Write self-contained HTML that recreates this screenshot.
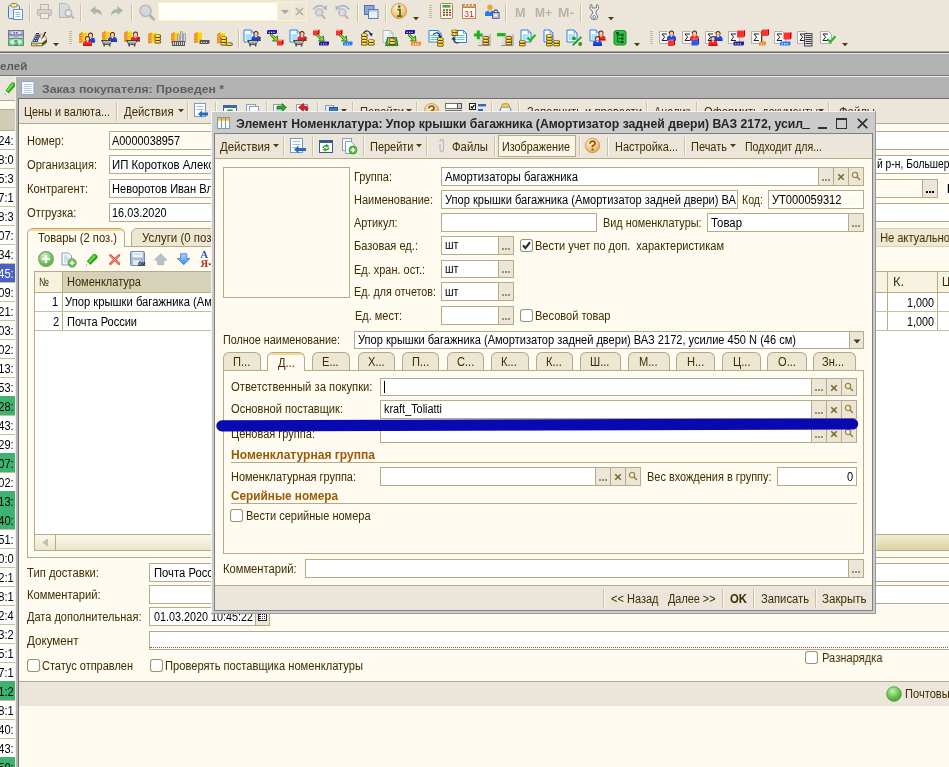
<!DOCTYPE html>
<html lang="ru">
<head>
<meta charset="utf-8">
<title>Элемент Номенклатура</title>
<style>
html,body{margin:0;padding:0;}
body{width:949px;height:767px;overflow:hidden;position:relative;background:#fffbf0;
font-family:"Liberation Sans",sans-serif;font-size:12px;}
#root{position:absolute;left:0;top:0;width:949px;height:767px;overflow:hidden;will-change:transform;}
#root div,#root span.t,#root svg{position:absolute;}
span.t{white-space:pre;display:block;}
</style>
</head>
<body>
<div id="root">
<div style="left:0px;top:0px;width:949px;height:52px;background:#ece6da;"></div>
<div style="left:0px;top:51px;width:949px;height:1px;background:#a8a6a0;"></div>
<div style="left:0px;top:52px;width:949px;height:1px;background:#6a6a6a;"></div>
<div style="left:0px;top:53px;width:949px;height:1px;background:#e2e2e2;"></div>
<div style="left:0px;top:54px;width:949px;height:21px;background:#b2b2b2;"></div>
<div style="left:0px;top:75px;width:949px;height:1px;background:#787878;"></div>
<div style="left:0px;top:76px;width:949px;height:1px;background:#ececec;"></div>
<div style="left:0px;top:77px;width:949px;height:21px;background:#b2b2b2;"></div>
<span class="t" style="top:59px;font-size:11.5px;line-height:14px;color:#5c5c5c;left:-0.5px;font-weight:bold;transform:scaleX(1.0179);transform-origin:0 0;">елей</span>
<svg style="left:0;top:0" width="949" height="52" viewBox="0 0 949 52"><g transform="translate(8 3)"><rect x="0.5" y="2.5" width="11" height="13" rx="1" fill="#dfeaf8" stroke="#4a78c0"/><rect x="3" y="0.5" width="6" height="3.5" rx="1" fill="#f4e8b0" stroke="#a08a40"/><rect x="5.5" y="6.5" width="9" height="10" fill="#fff" stroke="#6a90c8"/><path d="M7.5 9.5 H12.5 M7.5 11.5 H12.5 M7.5 13.5 H12.5" stroke="#9ab8e0"/></g><rect x="29" y="4" width="1" height="18" fill="#c9c2a4"/><rect x="30" y="4" width="1" height="18" fill="#fbf8ee"/><g transform="translate(37 4)"><rect x="3.5" y="0.5" width="8" height="5" fill="#e6e4dc" stroke="#b8b6ae"/><rect x="0.5" y="5.5" width="14" height="6" rx="1" fill="#d4d2ca" stroke="#b8b6ae"/><rect x="3.5" y="9.5" width="8" height="5" fill="#eeece6" stroke="#b8b6ae"/></g><g transform="translate(59 3)"><path d="M0.5 0.5 H7.5 L10.5 3.5 V14.5 H0.5 Z" fill="#d6dae0" stroke="#b8b6ae"/><circle cx="9.5" cy="10" r="3.2" fill="#e8eaee" stroke="#b8b6ae" stroke-width="1.4"/><path d="M12 12.5 L15 15.5" stroke="#b8b6ae" stroke-width="2"/></g><rect x="80" y="4" width="1" height="18" fill="#c9c2a4"/><rect x="81" y="4" width="1" height="18" fill="#fbf8ee"/><g transform="translate(90 6)"><path d="M0 4.5 L5.5 0 V3 Q12 3 12 10 Q10 6.5 5.5 6.5 V9 Z" fill="#a9b8a6"/></g><g transform="translate(111 6)"><path d="M12 4.5 L6.5 0 V3 Q0 3 0 10 Q2 6.5 6.5 6.5 V9 Z" fill="#a9b8a6"/></g><rect x="131" y="4" width="1" height="18" fill="#c9c2a4"/><rect x="132" y="4" width="1" height="18" fill="#fbf8ee"/><g transform="translate(139 4)"><path d="M10.2 10.6 L14.6 15.2" stroke="#b8aea4" stroke-width="2.8" stroke-linecap="round"/><circle cx="6.6" cy="6.8" r="5.6" fill="#cfd6e4" stroke="#c2b6b0" stroke-width="1.5"/></g><g transform="translate(312 3)"><path d="M9.4 11.8 L12.6 15" stroke="#c0b2ac" stroke-width="2.2" stroke-linecap="round"/><circle cx="7.2" cy="9.4" r="3.5" fill="#d3dae8" stroke="#c2b6b2" stroke-width="1.4"/><path d="M1 6.5 Q7 -0.5 13.5 5" fill="none" stroke="#a9b7cc" stroke-width="1.7"/><path d="M15.2 2.2 L14.6 7.4 L10.4 5.2 Z" fill="#a9b7cc"/></g><g transform="translate(335 3)"><path d="M9.4 11.8 L12.6 15" stroke="#c0b2ac" stroke-width="2.2" stroke-linecap="round"/><circle cx="7.2" cy="9.4" r="3.5" fill="#d3dae8" stroke="#c2b6b2" stroke-width="1.4"/><g transform="translate(15.5 0) scale(-1 1)"><path d="M1 6.5 Q7 -0.5 13.5 5" fill="none" stroke="#a9b7cc" stroke-width="1.7"/><path d="M15.2 2.2 L14.6 7.4 L10.4 5.2 Z" fill="#a9b7cc"/></g></g><rect x="357" y="4" width="1" height="18" fill="#c9c2a4"/><rect x="358" y="4" width="1" height="18" fill="#fbf8ee"/><g transform="translate(364 5)"><rect x="0.5" y="0.5" width="9.5" height="9" fill="#8ea8d4" stroke="#4a6ea8"/><rect x="4.5" y="4.5" width="9.5" height="9" fill="#e9eff9" stroke="#5a7cb4"/><rect x="5" y="5" width="8.5" height="1.6" fill="#b4c6e4"/></g><rect x="385" y="4" width="1" height="18" fill="#c9c2a4"/><rect x="386" y="4" width="1" height="18" fill="#fbf8ee"/><defs><radialGradient id="gi" cx="0.4" cy="0.3" r="0.9"><stop offset="0" stop-color="#fff4d8"/><stop offset="0.55" stop-color="#f2c47a"/><stop offset="1" stop-color="#d08a30"/></radialGradient></defs><g transform="translate(391 3)"><circle cx="8" cy="8" r="7.6" fill="url(#gi)" stroke="#c89048" stroke-width="0.8"/><circle cx="8.2" cy="3.6" r="1.35" fill="#4a6a10"/><path d="M6.4 6.6 H9 V13 M6.2 13.2 H10.6" stroke="#4a6a10" stroke-width="1.7" fill="none"/></g><path d="M413 17 h6 l-3 3.2 Z" fill="#4a3c10"/><rect x="429" y="5" width="3" height="1" fill="#c4bb92"/><rect x="429" y="7" width="3" height="1" fill="#c4bb92"/><rect x="429" y="9" width="3" height="1" fill="#c4bb92"/><rect x="429" y="11" width="3" height="1" fill="#c4bb92"/><rect x="429" y="13" width="3" height="1" fill="#c4bb92"/><rect x="429" y="15" width="3" height="1" fill="#c4bb92"/><rect x="429" y="17" width="3" height="1" fill="#c4bb92"/><g transform="translate(440 3)"><rect x="0.5" y="0.5" width="12" height="15" rx="0.8" fill="#fbf6e6" stroke="#a88a58"/><rect x="2.5" y="2" width="8" height="2.6" fill="#44aa44"/><path d="M3 7 H5 M6 7 H8 M3 9.5 H5 M6 9.5 H8 M3 12 H5 M6 12 H8 M9 9.5 H11" stroke="#6a4a20" stroke-width="1.4"/><path d="M9 7 H11 M9 12 H11" stroke="#d03a18" stroke-width="1.4"/></g><g transform="translate(462 3)"><rect x="0.5" y="1.5" width="13" height="14" fill="#fffefa" stroke="#b08a58"/><rect x="0.5" y="1.5" width="13" height="3" fill="#ec9a48" stroke="#b08a58"/><path d="M3.5 1 V3 M7 1 V3 M10.5 1 V3" stroke="#fff2d8" stroke-width="1.2"/><text x="7" y="13.6" font-family="Liberation Sans,sans-serif" font-size="9" fill="#d82818" text-anchor="middle" textLength="10" lengthAdjust="spacingAndGlyphs">31</text></g><g transform="translate(485 4)"><circle cx="5" cy="3.2" r="2.7" fill="#f2a436"/><path d="M0 12 V9.5 Q0 6.6 5 6.6 Q9.6 6.6 9.6 9.5 V12 Z" fill="#2a7ae4"/><path d="M3.6 6.8 L5 8.4 L6.4 6.8Z" fill="#fff"/><rect x="7.5" y="8.5" width="6.6" height="5.8" fill="#b4c4e4" stroke="#4a5a78" stroke-width="0.9"/><path d="M9 8.5 V7 Q10.8 4.8 12.6 7 V8.5" fill="none" stroke="#4a5a78" stroke-width="1.1"/><rect x="9.4" y="10.4" width="2.8" height="2" fill="#fff"/></g><rect x="505" y="4" width="1" height="18" fill="#c9c2a4"/><rect x="506" y="4" width="1" height="18" fill="#fbf8ee"/><rect x="580" y="4" width="1" height="18" fill="#c9c2a4"/><rect x="581" y="4" width="1" height="18" fill="#fbf8ee"/><g transform="translate(589 4)"><path d="M2 0.5 Q0.2 2.2 1 4.6 Q1.8 6.4 3.4 6.8 V10 Q1.6 11 1.6 13 Q1.8 15.6 5.2 15.6 Q8.6 15.6 8.8 13 Q8.8 11 7 10 V6.8 Q8.6 6.4 9.4 4.6 Q10.2 2.2 8.4 0.5 L7.4 1.2 V4 H3 V1.2 Z" fill="#f2f2f4" stroke="#74767c" stroke-width="1"/><ellipse cx="5.2" cy="13" rx="1.4" ry="1.6" fill="#ece7db" stroke="#74767c" stroke-width="0.8"/></g><path d="M608 17 h6 l-3 3.2 Z" fill="#4a3c10"/><g transform="translate(8 30)"><rect x="0.5" y="0.5" width="15" height="4.6" fill="#a9a9d8" stroke="#6c7684"/><ellipse cx="8" cy="2.8" rx="5" ry="1.6" fill="#e4e4f6"/><path d="M5.5 2.8 H10.5" stroke="#3a3a78" stroke-width="1.2" stroke-dasharray="1.6 0.8"/><rect x="0.5" y="5.1" width="15" height="3.4" fill="#c9c9f0" stroke="#6c7684"/><path d="M6 7 H10" stroke="#8a8ab8" stroke-width="0.9"/><rect x="0.5" y="8.5" width="15" height="7" fill="#7cc894" stroke="#5a9a78"/><ellipse cx="8" cy="12" rx="6" ry="2.7" fill="#c4f8cc"/><text x="8" y="14.8" font-family="Liberation Sans,sans-serif" font-size="7.5" font-weight="bold" fill="#2a8a58" text-anchor="middle">$</text></g><g transform="translate(31 30)"><path d="M0.5 13 H11 L15.5 9.6 V12.4 L11 15.8 H0.5 Z" fill="#e6e696" stroke="#3a3a1a" stroke-width="0.7"/><path d="M11 13 L15.5 9.6 V12.4 L11 15.8 Z" fill="#4a4a28"/><path d="M0.5 13 L4.6 4.4 H10.4 L14.8 6.4 L15.5 9.6 L11 13 Z" fill="#f6f6c4" stroke="#6a6a3a" stroke-width="0.6"/><path d="M1.6 12 L4.8 5 H9.2 L6.6 12 Z" fill="#2432a8"/><path d="M4.6 6.6 H8.2 M3.8 8.6 H7.4 M3 10.6 H6.6" stroke="#e8ecff" stroke-width="1" stroke-dasharray="1 0.9"/><rect x="8" y="5.4" width="1.6" height="2" fill="#ee2020"/><path d="M3.4 3.6 Q2.6 0.4 5.6 0.6 L8.4 1.6 L7.6 4.2 Z" fill="#ffffff" stroke="#b8b8c8" stroke-width="0.5"/><path d="M5 3.6 H8" stroke="#202020" stroke-width="1"/><path d="M10.6 9.4 L13.4 4.4 Q13.2 2.6 15 2.4" fill="none" stroke="#181818" stroke-width="1.1"/><path d="M10 10.4 L12 7.4 L14.6 8.4 L13 11 Z" fill="#ffffff" stroke="#b0b0b0" stroke-width="0.4"/><path d="M3.4 14.4 H6.4" stroke="#e89a28" stroke-width="0.9"/></g><path d="M53 43 h6 l-3 3.2 Z" fill="#4a3c10"/><rect x="69" y="31" width="3" height="1" fill="#c4bb92"/><rect x="69" y="33" width="3" height="1" fill="#c4bb92"/><rect x="69" y="35" width="3" height="1" fill="#c4bb92"/><rect x="69" y="37" width="3" height="1" fill="#c4bb92"/><rect x="69" y="39" width="3" height="1" fill="#c4bb92"/><rect x="69" y="41" width="3" height="1" fill="#c4bb92"/><rect x="69" y="43" width="3" height="1" fill="#c4bb92"/><g transform="translate(79 31)"><path d="M0 3 L3.8 0.6 V11.4 L0 12 Z" fill="#f4841a"/><path d="M3.8 0.6 L8 0 V10.6 L3.8 11.4 Z" fill="#fbe01a"/><path d="M3.8 0.6 L8 0 L8 1.2 L3.8 2 Z" fill="#fff07a"/><path d="M0 5.2 L3.8 3.4 M0 7.6 L3.8 6 M0 10 L3.8 8.6" stroke="#ffb864" stroke-width="0.8"/><path d="M3.8 3.6 L8 3 M3.8 6.2 L8 5.6 M3.8 8.8 L8 8.2" stroke="#e8b800" stroke-width="0.7"/></g><g transform="translate(86 32)"><path d="M0 10.5 V8 Q0 5.6 2.6 5.2 L4.5 6.8 L6.4 5.2 Q9 5.6 9 8 V10.5 Z" fill="#2048e8"/><path d="M0 10.5 V9 H9 V10.5 Z" fill="#0a2aa0" opacity="0.55"/><path d="M3.2 5.2 L4.5 7 L5.8 5.2 Z" fill="#ffffff"/><circle cx="4.5" cy="3" r="2.5" fill="#5a1c0c"/><ellipse cx="4.5" cy="3.5" rx="1.7" ry="1.9" fill="#f9cfa6"/></g><g transform="translate(83 35.5)"><path d="M0 10.5 V8 Q0 5.6 2.6 5.2 L4.5 6.8 L6.4 5.2 Q9 5.6 9 8 V10.5 Z" fill="#fa2424"/><path d="M0 10.5 V9 H9 V10.5 Z" fill="#a00808" opacity="0.55"/><path d="M3.2 5.2 L4.5 7 L5.8 5.2 Z" fill="#ffffff"/><circle cx="4.5" cy="3" r="2.5" fill="#5a1c0c"/><ellipse cx="4.5" cy="3.5" rx="1.7" ry="1.9" fill="#f9cfa6"/></g><g transform="translate(102 30)"><path d="M0 3 L3.8 0.6 V11.4 L0 12 Z" fill="#f4841a"/><path d="M3.8 0.6 L8 0 V10.6 L3.8 11.4 Z" fill="#fbe01a"/><path d="M3.8 0.6 L8 0 L8 1.2 L3.8 2 Z" fill="#fff07a"/><path d="M0 5.2 L3.8 3.4 M0 7.6 L3.8 6 M0 10 L3.8 8.6" stroke="#ffb864" stroke-width="0.8"/><path d="M3.8 3.6 L8 3 M3.8 6.2 L8 5.6 M3.8 8.8 L8 8.2" stroke="#e8b800" stroke-width="0.7"/></g><g transform="translate(108 31.5)"><path d="M0 10.5 V8 Q0 5.6 2.6 5.2 L4.5 6.8 L6.4 5.2 Q9 5.6 9 8 V10.5 Z" fill="#2048e8"/><path d="M0 10.5 V9 H9 V10.5 Z" fill="#0a2aa0" opacity="0.55"/><path d="M3.2 5.2 L4.5 7 L5.8 5.2 Z" fill="#ffffff"/><circle cx="4.5" cy="3" r="2.5" fill="#5a1c0c"/><ellipse cx="4.5" cy="3.5" rx="1.7" ry="1.9" fill="#f9cfa6"/></g><g transform="translate(101 40)"><path d="M0 0 H11.5 L9.2 5 H2.6 Z" fill="#454545"/><path d="M11 0.6 L13.6 -2.8" stroke="#454545" stroke-width="1.3"/><path d="M3.4 5 L3 6.4 M8.4 5 L8.8 6.4" stroke="#454545" stroke-width="1.6"/><circle cx="3" cy="1.9" r="0.85" fill="#fff"/><circle cx="5" cy="1.9" r="0.85" fill="#fff"/><circle cx="7" cy="1.9" r="0.85" fill="#fff"/><circle cx="9" cy="1.9" r="0.85" fill="#fff"/><circle cx="4.2" cy="3.7" r="0.6" fill="#ddd"/><circle cx="6" cy="3.7" r="0.6" fill="#ddd"/><circle cx="7.8" cy="3.7" r="0.6" fill="#ddd"/></g><g transform="translate(124 30)"><path d="M0 3 L3.8 0.6 V11.4 L0 12 Z" fill="#f4841a"/><path d="M3.8 0.6 L8 0 V10.6 L3.8 11.4 Z" fill="#fbe01a"/><path d="M3.8 0.6 L8 0 L8 1.2 L3.8 2 Z" fill="#fff07a"/><path d="M0 5.2 L3.8 3.4 M0 7.6 L3.8 6 M0 10 L3.8 8.6" stroke="#ffb864" stroke-width="0.8"/><path d="M3.8 3.6 L8 3 M3.8 6.2 L8 5.6 M3.8 8.8 L8 8.2" stroke="#e8b800" stroke-width="0.7"/></g><g transform="translate(131 31)"><path d="M0 10.5 V8 Q0 5.6 2.6 5.2 L4.5 6.8 L6.4 5.2 Q9 5.6 9 8 V10.5 Z" fill="#fa2424"/><path d="M0 10.5 V9 H9 V10.5 Z" fill="#a00808" opacity="0.55"/><path d="M3.2 5.2 L4.5 7 L5.8 5.2 Z" fill="#ffffff"/><circle cx="4.5" cy="3" r="2.5" fill="#5a1c0c"/><ellipse cx="4.5" cy="3.5" rx="1.7" ry="1.9" fill="#f9cfa6"/></g><g transform="translate(126 40)"><path d="M0 0 H11.5 L9.2 5 H2.6 Z" fill="#454545"/><path d="M11 0.6 L13.6 -2.8" stroke="#454545" stroke-width="1.3"/><path d="M3.4 5 L3 6.4 M8.4 5 L8.8 6.4" stroke="#454545" stroke-width="1.6"/><circle cx="3" cy="1.9" r="0.85" fill="#fff"/><circle cx="5" cy="1.9" r="0.85" fill="#fff"/><circle cx="7" cy="1.9" r="0.85" fill="#fff"/><circle cx="9" cy="1.9" r="0.85" fill="#fff"/><circle cx="4.2" cy="3.7" r="0.6" fill="#ddd"/><circle cx="6" cy="3.7" r="0.6" fill="#ddd"/><circle cx="7.8" cy="3.7" r="0.6" fill="#ddd"/></g><g transform="translate(148 31.5)"><path d="M0 3 L3.8 0.6 V11.4 L0 12 Z" fill="#f4841a"/><path d="M3.8 0.6 L8 0 V10.6 L3.8 11.4 Z" fill="#fbe01a"/><path d="M3.8 0.6 L8 0 L8 1.2 L3.8 2 Z" fill="#fff07a"/><path d="M0 5.2 L3.8 3.4 M0 7.6 L3.8 6 M0 10 L3.8 8.6" stroke="#ffb864" stroke-width="0.8"/><path d="M3.8 3.6 L8 3 M3.8 6.2 L8 5.6 M3.8 8.8 L8 8.2" stroke="#e8b800" stroke-width="0.7"/></g><g transform="translate(154.5 34.5)"><rect x="0" y="5.8" width="6.6" height="3.2" rx="1.5" fill="#4a2a00"/><rect x="0.6" y="6.4" width="5.4" height="1.9" rx="0.9" fill="#ffd41a"/><rect x="1.4" y="6.5" width="2.2" height="0.8" fill="#fff6b0"/><rect x="0" y="2.9" width="6.6" height="3.2" rx="1.5" fill="#4a2a00"/><rect x="0.6" y="3.5" width="5.4" height="1.9" rx="0.9" fill="#ffd41a"/><rect x="1.4" y="3.6" width="2.2" height="0.8" fill="#fff6b0"/><rect x="0" y="0.0" width="6.6" height="3.2" rx="1.5" fill="#4a2a00"/><rect x="0.6" y="0.6" width="5.4" height="1.9" rx="0.9" fill="#ffd41a"/><rect x="1.4" y="0.7" width="2.2" height="0.8" fill="#fff6b0"/></g><g transform="translate(171 31)"><path d="M0 3 L3.8 0.6 V11.4 L0 12 Z" fill="#f4841a"/><path d="M3.8 0.6 L8 0 V10.6 L3.8 11.4 Z" fill="#fbe01a"/><path d="M3.8 0.6 L8 0 L8 1.2 L3.8 2 Z" fill="#fff07a"/><path d="M0 5.2 L3.8 3.4 M0 7.6 L3.8 6 M0 10 L3.8 8.6" stroke="#ffb864" stroke-width="0.8"/><path d="M3.8 3.6 L8 3 M3.8 6.2 L8 5.6 M3.8 8.8 L8 8.2" stroke="#e8b800" stroke-width="0.7"/></g><g transform="translate(176 31)"><path d="M1.5 11 V4 L2.5 3 L3.5 4 V11 M4.5 11 V1 L5.5 0 L6.5 1 V11 M7.5 11 V3 L8.5 2 L9.5 3 V11" fill="#d4d8dc" stroke="#7a7e84" stroke-width="0.6"/></g><g transform="translate(172 41)"><rect x="0" y="0" width="13" height="5" fill="#585c60"/><path d="M1.5 1 V4 M3.5 1 V4 M5.5 1 V4 M7.5 1 V4 M9.5 1 V4 M11.5 1 V4" stroke="#e4e4e4" stroke-width="0.9"/></g><g transform="translate(194 31)"><path d="M0 3 L3.8 0.6 V11.4 L0 12 Z" fill="#f4841a"/><path d="M3.8 0.6 L8 0 V10.6 L3.8 11.4 Z" fill="#fbe01a"/><path d="M3.8 0.6 L8 0 L8 1.2 L3.8 2 Z" fill="#fff07a"/><path d="M0 5.2 L3.8 3.4 M0 7.6 L3.8 6 M0 10 L3.8 8.6" stroke="#ffb864" stroke-width="0.8"/><path d="M3.8 3.6 L8 3 M3.8 6.2 L8 5.6 M3.8 8.8 L8 8.2" stroke="#e8b800" stroke-width="0.7"/></g><g transform="translate(199.5 40)"><path d="M0 1 L1 0 H10 V3 L9 4 H0 Z" fill="#50545a"/><path d="M1.6 2.4 H7.6" stroke="#e8e8e8" stroke-width="1.2" stroke-dasharray="1.2 1.2"/></g><g transform="translate(217 31.5)"><path d="M0 3 L3.8 0.6 V11.4 L0 12 Z" fill="#f4841a"/><path d="M3.8 0.6 L8 0 V10.6 L3.8 11.4 Z" fill="#fbe01a"/><path d="M3.8 0.6 L8 0 L8 1.2 L3.8 2 Z" fill="#fff07a"/><path d="M0 5.2 L3.8 3.4 M0 7.6 L3.8 6 M0 10 L3.8 8.6" stroke="#ffb864" stroke-width="0.8"/><path d="M3.8 3.6 L8 3 M3.8 6.2 L8 5.6 M3.8 8.8 L8 8.2" stroke="#e8b800" stroke-width="0.7"/></g><g transform="translate(220.5 36.5)"><rect x="0" y="5.8" width="6.6" height="3.2" rx="1.5" fill="#4a2a00"/><rect x="0.6" y="6.4" width="5.4" height="1.9" rx="0.9" fill="#ffd41a"/><rect x="1.4" y="6.5" width="2.2" height="0.8" fill="#fff6b0"/><rect x="0" y="2.9" width="6.6" height="3.2" rx="1.5" fill="#4a2a00"/><rect x="0.6" y="3.5" width="5.4" height="1.9" rx="0.9" fill="#ffd41a"/><rect x="1.4" y="3.6" width="2.2" height="0.8" fill="#fff6b0"/><rect x="0" y="0.0" width="6.6" height="3.2" rx="1.5" fill="#4a2a00"/><rect x="0.6" y="0.6" width="5.4" height="1.9" rx="0.9" fill="#ffd41a"/><rect x="1.4" y="0.7" width="2.2" height="0.8" fill="#fff6b0"/></g><g transform="translate(226 42.6)"><rect x="0" y="0.0" width="6.6" height="3.2" rx="1.5" fill="#4a2a00"/><rect x="0.6" y="0.6" width="5.4" height="1.9" rx="0.9" fill="#ffd41a"/><rect x="1.4" y="0.7" width="2.2" height="0.8" fill="#fff6b0"/></g><rect x="238" y="30" width="1" height="18" fill="#c9c2a4"/><rect x="239" y="30" width="1" height="18" fill="#fbf8ee"/><g transform="translate(243.5 29.5)"><path d="M0.5 0.5 H7.5 L10.5 3.5 V12.5 H0.5 Z" fill="#ffffff" stroke="#2a80e0"/><path d="M7.5 0.5 V3.5 H10.5" fill="none" stroke="#2a80e0" stroke-width="0.7"/><path d="M2 5.5 H8.5" stroke="#40c0f0" stroke-width="0.9"/><path d="M2 7.5 H8.5" stroke="#40c0f0" stroke-width="0.9"/><path d="M2 9.5 H8.5" stroke="#40c0f0" stroke-width="0.9"/></g><g transform="translate(251.5 30.5)"><path d="M0 10.5 V8 Q0 5.6 2.6 5.2 L4.5 6.8 L6.4 5.2 Q9 5.6 9 8 V10.5 Z" fill="#2048e8"/><path d="M0 10.5 V9 H9 V10.5 Z" fill="#0a2aa0" opacity="0.55"/><path d="M3.2 5.2 L4.5 7 L5.8 5.2 Z" fill="#ffffff"/><circle cx="4.5" cy="3" r="2.5" fill="#5a1c0c"/><ellipse cx="4.5" cy="3.5" rx="1.7" ry="1.9" fill="#f9cfa6"/></g><g transform="translate(247 40)"><path d="M0 0 H11.5 L9.2 5 H2.6 Z" fill="#454545"/><path d="M11 0.6 L13.6 -2.8" stroke="#454545" stroke-width="1.3"/><path d="M3.4 5 L3 6.4 M8.4 5 L8.8 6.4" stroke="#454545" stroke-width="1.6"/><circle cx="3" cy="1.9" r="0.85" fill="#fff"/><circle cx="5" cy="1.9" r="0.85" fill="#fff"/><circle cx="7" cy="1.9" r="0.85" fill="#fff"/><circle cx="9" cy="1.9" r="0.85" fill="#fff"/><circle cx="4.2" cy="3.7" r="0.6" fill="#ddd"/><circle cx="6" cy="3.7" r="0.6" fill="#ddd"/><circle cx="7.8" cy="3.7" r="0.6" fill="#ddd"/></g><g transform="translate(267 30)"><path d="M0 1 L1 0 H10 V3 L9 4 H0 Z" fill="#1c1cb4"/><path d="M1.6 2.4 H7.6" stroke="#ffe040" stroke-width="1.2" stroke-dasharray="1.2 1.2"/></g><g transform="translate(269.5 33.5)"><path d="M0.5 1.8 L2 0.4 L6.2 4.2 L7.8 2.4 L8.6 7.6 L3 7.4 L4.8 5.8 Z" fill="#8cdc28" stroke="#1e5c10" stroke-width="0.8" stroke-linejoin="round"/></g><g transform="translate(277 39.5)"><rect x="0" y="1" width="5" height="5" fill="#ff3030"/><path d="M0 1 L1.5 0 H6.5 L5 1Z" fill="#ff9090"/><path d="M5 1 L6.5 0 V4.5 L5 6Z" fill="#c00000"/></g><g transform="translate(289.5 29.5)"><path d="M0.5 0.5 H7.5 L10.5 3.5 V12.5 H0.5 Z" fill="#ffffff" stroke="#2a80e0"/><path d="M7.5 0.5 V3.5 H10.5" fill="none" stroke="#2a80e0" stroke-width="0.7"/><path d="M2 5.5 H8.5" stroke="#40c0f0" stroke-width="0.9"/><path d="M2 7.5 H8.5" stroke="#40c0f0" stroke-width="0.9"/><path d="M2 9.5 H8.5" stroke="#40c0f0" stroke-width="0.9"/></g><g transform="translate(297.5 30.5)"><path d="M0 10.5 V8 Q0 5.6 2.6 5.2 L4.5 6.8 L6.4 5.2 Q9 5.6 9 8 V10.5 Z" fill="#fa2424"/><path d="M0 10.5 V9 H9 V10.5 Z" fill="#a00808" opacity="0.55"/><path d="M3.2 5.2 L4.5 7 L5.8 5.2 Z" fill="#ffffff"/><circle cx="4.5" cy="3" r="2.5" fill="#5a1c0c"/><ellipse cx="4.5" cy="3.5" rx="1.7" ry="1.9" fill="#f9cfa6"/></g><g transform="translate(293 40)"><path d="M0 0 H11.5 L9.2 5 H2.6 Z" fill="#454545"/><path d="M11 0.6 L13.6 -2.8" stroke="#454545" stroke-width="1.3"/><path d="M3.4 5 L3 6.4 M8.4 5 L8.8 6.4" stroke="#454545" stroke-width="1.6"/><circle cx="3" cy="1.9" r="0.85" fill="#fff"/><circle cx="5" cy="1.9" r="0.85" fill="#fff"/><circle cx="7" cy="1.9" r="0.85" fill="#fff"/><circle cx="9" cy="1.9" r="0.85" fill="#fff"/><circle cx="4.2" cy="3.7" r="0.6" fill="#ddd"/><circle cx="6" cy="3.7" r="0.6" fill="#ddd"/><circle cx="7.8" cy="3.7" r="0.6" fill="#ddd"/></g><g transform="translate(313 29.5)"><rect x="0" y="1" width="5" height="5" fill="#ff3030"/><path d="M0 1 L1.5 0 H6.5 L5 1Z" fill="#ff9090"/><path d="M5 1 L6.5 0 V4.5 L5 6Z" fill="#c00000"/></g><g transform="translate(315.5 33.5)"><path d="M0.5 1.8 L2 0.4 L6.2 4.2 L7.8 2.4 L8.6 7.6 L3 7.4 L4.8 5.8 Z" fill="#8cdc28" stroke="#1e5c10" stroke-width="0.8" stroke-linejoin="round"/></g><g transform="translate(319 41.6)"><path d="M0 1 L1 0 H10 V3 L9 4 H0 Z" fill="#1c1cb4"/><path d="M1.6 2.4 H7.6" stroke="#ffe040" stroke-width="1.2" stroke-dasharray="1.2 1.2"/></g><g transform="translate(336 29.5)"><rect x="0" y="1" width="5" height="5" fill="#ff3030"/><path d="M0 1 L1.5 0 H6.5 L5 1Z" fill="#ff9090"/><path d="M5 1 L6.5 0 V4.5 L5 6Z" fill="#c00000"/></g><g transform="translate(338.5 33.5)"><path d="M0.5 1.8 L2 0.4 L6.2 4.2 L7.8 2.4 L8.6 7.6 L3 7.4 L4.8 5.8 Z" fill="#8cdc28" stroke="#1e5c10" stroke-width="0.8" stroke-linejoin="round"/></g><g transform="translate(343 41.6)"><path d="M0 1 L1 0 H9.5 V3 L8.5 4 H0 Z" fill="#2a7af0"/><path d="M1.6 2.4 H7.1" stroke="#ffffff" stroke-width="1.2" stroke-dasharray="1.2 1.2"/></g><g transform="translate(361 33.5)"><rect x="0" y="8.7" width="6.6" height="3.2" rx="1.5" fill="#4a2a00"/><rect x="0.6" y="9.3" width="5.4" height="1.9" rx="0.9" fill="#ffd41a"/><rect x="1.4" y="9.4" width="2.2" height="0.8" fill="#fff6b0"/><rect x="0" y="5.8" width="6.6" height="3.2" rx="1.5" fill="#4a2a00"/><rect x="0.6" y="6.4" width="5.4" height="1.9" rx="0.9" fill="#ffd41a"/><rect x="1.4" y="6.5" width="2.2" height="0.8" fill="#fff6b0"/><rect x="0" y="2.9" width="6.6" height="3.2" rx="1.5" fill="#4a2a00"/><rect x="0.6" y="3.5" width="5.4" height="1.9" rx="0.9" fill="#ffd41a"/><rect x="1.4" y="3.6" width="2.2" height="0.8" fill="#fff6b0"/><rect x="0" y="0.0" width="6.6" height="3.2" rx="1.5" fill="#4a2a00"/><rect x="0.6" y="0.6" width="5.4" height="1.9" rx="0.9" fill="#ffd41a"/><rect x="1.4" y="0.7" width="2.2" height="0.8" fill="#fff6b0"/></g><g transform="translate(368 39.4)"><rect x="0" y="2.9" width="6.6" height="3.2" rx="1.5" fill="#4a2a00"/><rect x="0.6" y="3.5" width="5.4" height="1.9" rx="0.9" fill="#ffd41a"/><rect x="1.4" y="3.6" width="2.2" height="0.8" fill="#fff6b0"/><rect x="0" y="0.0" width="6.6" height="3.2" rx="1.5" fill="#4a2a00"/><rect x="0.6" y="0.6" width="5.4" height="1.9" rx="0.9" fill="#ffd41a"/><rect x="1.4" y="0.7" width="2.2" height="0.8" fill="#fff6b0"/></g><g transform="translate(363 30)"><path d="M0.5 3 Q4.5 -1.5 8 4" fill="none" stroke="#1a2a5a" stroke-width="1.2"/><path d="M5.8 3.6 L9.8 3.2 L8.4 6.6Z" fill="#1a2a5a"/></g><g transform="translate(382.5 30)"><path d="M0.5 0.5 H7.5 L10.5 3.5 V12.5 H0.5 Z" fill="#f4f4f4" stroke="#b4b4b4"/><path d="M7.5 0.5 V3.5 H10.5" fill="none" stroke="#b4b4b4" stroke-width="0.7"/><path d="M2 5.5 H8.5" stroke="#e0e0e0" stroke-width="0.9"/><path d="M2 7.5 H8.5" stroke="#e0e0e0" stroke-width="0.9"/><path d="M2 9.5 H8.5" stroke="#e0e0e0" stroke-width="0.9"/></g><g transform="translate(385.5 37)"><path d="M2 0.5 H11 L12.5 8.6 H0 Z" fill="#3aa83a" stroke="#1a6a1a" stroke-width="0.8"/><rect x="3" y="1.5" width="7" height="5.5" fill="#e8f4d8"/></g><g transform="translate(389 38.6)"><rect x="0" y="2.9" width="6.6" height="3.2" rx="1.5" fill="#4a2a00"/><rect x="0.6" y="3.5" width="5.4" height="1.9" rx="0.9" fill="#ffd41a"/><rect x="1.4" y="3.6" width="2.2" height="0.8" fill="#fff6b0"/><rect x="0" y="0.0" width="6.6" height="3.2" rx="1.5" fill="#4a2a00"/><rect x="0.6" y="0.6" width="5.4" height="1.9" rx="0.9" fill="#ffd41a"/><rect x="1.4" y="0.7" width="2.2" height="0.8" fill="#fff6b0"/></g><g transform="translate(405 30)"><path d="M0 1 L1 0 H10 V3 L9 4 H0 Z" fill="#1c1cb4"/><path d="M1.6 2.4 H7.6" stroke="#ffe040" stroke-width="1.2" stroke-dasharray="1.2 1.2"/></g><g transform="translate(407.5 33.5)"><path d="M0.5 1.8 L2 0.4 L6.2 4.2 L7.8 2.4 L8.6 7.6 L3 7.4 L4.8 5.8 Z" fill="#8cdc28" stroke="#1e5c10" stroke-width="0.8" stroke-linejoin="round"/></g><g transform="translate(411 41.8)"><path d="M0 1 L1 0 H10 V3 L9 4 H0 Z" fill="#f08838"/><path d="M1.6 2.4 H7.6" stroke="#ffffff" stroke-width="1.2" stroke-dasharray="1.2 1.2"/></g><g transform="translate(428.5 30)"><path d="M0.5 0.5 H9.5 L12.5 3.5 V12.0 H0.5 Z" fill="#ffffff" stroke="#2a80e0"/><path d="M9.5 0.5 V3.5 H12.5" fill="none" stroke="#2a80e0" stroke-width="0.7"/><path d="M2 5.5 H10.5" stroke="#40c0f0" stroke-width="0.9"/><path d="M2 7.5 H10.5" stroke="#40c0f0" stroke-width="0.9"/><path d="M2 9.5 H10.5" stroke="#40c0f0" stroke-width="0.9"/></g><g transform="translate(437 37.4)"><rect x="0" y="5.8" width="6.6" height="3.2" rx="1.5" fill="#4a2a00"/><rect x="0.6" y="6.4" width="5.4" height="1.9" rx="0.9" fill="#ffd41a"/><rect x="1.4" y="6.5" width="2.2" height="0.8" fill="#fff6b0"/><rect x="0" y="2.9" width="6.6" height="3.2" rx="1.5" fill="#4a2a00"/><rect x="0.6" y="3.5" width="5.4" height="1.9" rx="0.9" fill="#ffd41a"/><rect x="1.4" y="3.6" width="2.2" height="0.8" fill="#fff6b0"/><rect x="0" y="0.0" width="6.6" height="3.2" rx="1.5" fill="#4a2a00"/><rect x="0.6" y="0.6" width="5.4" height="1.9" rx="0.9" fill="#ffd41a"/><rect x="1.4" y="0.7" width="2.2" height="0.8" fill="#fff6b0"/></g><g transform="translate(433 32)"><path d="M0 2.5 Q5 -1.5 7 4" fill="none" stroke="#1a2a5a" stroke-width="1.1"/><path d="M5 3.6 H9 L7 6.6Z" fill="#1a2a5a"/></g><g transform="translate(454.5 30)"><path d="M0.5 0.5 H9.0 L12.0 3.5 V12.5 H0.5 Z" fill="#ffffff" stroke="#2a80e0"/><path d="M9.0 0.5 V3.5 H12.0" fill="none" stroke="#2a80e0" stroke-width="0.7"/><path d="M2 5.5 H10.0" stroke="#40c0f0" stroke-width="0.9"/><path d="M2 7.5 H10.0" stroke="#40c0f0" stroke-width="0.9"/><path d="M2 9.5 H10.0" stroke="#40c0f0" stroke-width="0.9"/></g><g transform="translate(451.5 29.8)"><rect x="0" y="2.9" width="6.6" height="3.2" rx="1.5" fill="#4a2a00"/><rect x="0.6" y="3.5" width="5.4" height="1.9" rx="0.9" fill="#ffd41a"/><rect x="1.4" y="3.6" width="2.2" height="0.8" fill="#fff6b0"/><rect x="0" y="0.0" width="6.6" height="3.2" rx="1.5" fill="#4a2a00"/><rect x="0.6" y="0.6" width="5.4" height="1.9" rx="0.9" fill="#ffd41a"/><rect x="1.4" y="0.7" width="2.2" height="0.8" fill="#fff6b0"/></g><g transform="translate(452 37)"><path d="M6.5 6 Q1.5 6.5 1.6 1.6" fill="none" stroke="#1a2a5a" stroke-width="1.1"/><path d="M-0.6 2.6 L1.6 -0.4 L3.8 2.8Z" fill="#1a2a5a"/></g><g transform="translate(478 34)"><path d="M3 0.5 H12 V11.5 H0 Z" fill="#dcdcdc"/><path d="M0 11.5 H12 V0.5" fill="none" stroke="#8a8a8a" stroke-width="0.9"/></g><g transform="translate(482.5 36.3)"><rect x="0" y="5.8" width="6.6" height="3.2" rx="1.5" fill="#4a2a00"/><rect x="0.6" y="6.4" width="5.4" height="1.9" rx="0.9" fill="#ffd41a"/><rect x="1.4" y="6.5" width="2.2" height="0.8" fill="#fff6b0"/><rect x="0" y="2.9" width="6.6" height="3.2" rx="1.5" fill="#4a2a00"/><rect x="0.6" y="3.5" width="5.4" height="1.9" rx="0.9" fill="#ffd41a"/><rect x="1.4" y="3.6" width="2.2" height="0.8" fill="#fff6b0"/><rect x="0" y="0.0" width="6.6" height="3.2" rx="1.5" fill="#4a2a00"/><rect x="0.6" y="0.6" width="5.4" height="1.9" rx="0.9" fill="#ffd41a"/><rect x="1.4" y="0.7" width="2.2" height="0.8" fill="#fff6b0"/></g><g transform="translate(474 30.6)"><path d="M4.3 0 V8.6 M0 4.3 H8.6" stroke="#18b418" stroke-width="3"/></g><g transform="translate(501 34)"><path d="M3 0.5 H12 V11.5 H0 Z" fill="#dcdcdc"/><path d="M0 11.5 H12 V0.5" fill="none" stroke="#8a8a8a" stroke-width="0.9"/></g><g transform="translate(505.5 36.3)"><rect x="0" y="5.8" width="6.6" height="3.2" rx="1.5" fill="#4a2a00"/><rect x="0.6" y="6.4" width="5.4" height="1.9" rx="0.9" fill="#ffd41a"/><rect x="1.4" y="6.5" width="2.2" height="0.8" fill="#fff6b0"/><rect x="0" y="2.9" width="6.6" height="3.2" rx="1.5" fill="#4a2a00"/><rect x="0.6" y="3.5" width="5.4" height="1.9" rx="0.9" fill="#ffd41a"/><rect x="1.4" y="3.6" width="2.2" height="0.8" fill="#fff6b0"/><rect x="0" y="0.0" width="6.6" height="3.2" rx="1.5" fill="#4a2a00"/><rect x="0.6" y="0.6" width="5.4" height="1.9" rx="0.9" fill="#ffd41a"/><rect x="1.4" y="0.7" width="2.2" height="0.8" fill="#fff6b0"/></g><g transform="translate(497 33)"><path d="M0 1.7 H8.6" stroke="#18b418" stroke-width="3.2"/></g><g transform="translate(520.5 29.5)"><path d="M0.5 0.5 H7.5 L10.5 3.5 V12.5 H0.5 Z" fill="#ffffff" stroke="#2a80e0"/><path d="M7.5 0.5 V3.5 H10.5" fill="none" stroke="#2a80e0" stroke-width="0.7"/><path d="M2 5.5 H8.5" stroke="#40c0f0" stroke-width="0.9"/><path d="M2 7.5 H8.5" stroke="#40c0f0" stroke-width="0.9"/><path d="M2 9.5 H8.5" stroke="#40c0f0" stroke-width="0.9"/></g><g transform="translate(527 34)"><path d="M0.5 3.5 L3.2 6.5 L8.5 0.8" fill="none" stroke="#28b428" stroke-width="2.2"/></g><g transform="translate(519 40.2)"><rect x="0" y="2.9" width="6.6" height="3.2" rx="1.5" fill="#4a2a00"/><rect x="0.6" y="3.5" width="5.4" height="1.9" rx="0.9" fill="#ffd41a"/><rect x="1.4" y="3.6" width="2.2" height="0.8" fill="#fff6b0"/><rect x="0" y="0.0" width="6.6" height="3.2" rx="1.5" fill="#4a2a00"/><rect x="0.6" y="0.6" width="5.4" height="1.9" rx="0.9" fill="#ffd41a"/><rect x="1.4" y="0.7" width="2.2" height="0.8" fill="#fff6b0"/></g><g transform="translate(543.5 29.5)"><path d="M0.5 0.5 H6.5 L9.5 3.5 V12.5 H0.5 Z" fill="#ffffff" stroke="#2a80e0"/><path d="M6.5 0.5 V3.5 H9.5" fill="none" stroke="#2a80e0" stroke-width="0.7"/><path d="M2 5.5 H7.5" stroke="#40c0f0" stroke-width="0.9"/><path d="M2 7.5 H7.5" stroke="#40c0f0" stroke-width="0.9"/><path d="M2 9.5 H7.5" stroke="#40c0f0" stroke-width="0.9"/></g><g transform="translate(546 34.4)"><rect x="0" y="8.7" width="6.6" height="3.2" rx="1.5" fill="#4a2a00"/><rect x="0.6" y="9.3" width="5.4" height="1.9" rx="0.9" fill="#ffd41a"/><rect x="1.4" y="9.4" width="2.2" height="0.8" fill="#fff6b0"/><rect x="0" y="5.8" width="6.6" height="3.2" rx="1.5" fill="#4a2a00"/><rect x="0.6" y="6.4" width="5.4" height="1.9" rx="0.9" fill="#ffd41a"/><rect x="1.4" y="6.5" width="2.2" height="0.8" fill="#fff6b0"/><rect x="0" y="2.9" width="6.6" height="3.2" rx="1.5" fill="#4a2a00"/><rect x="0.6" y="3.5" width="5.4" height="1.9" rx="0.9" fill="#ffd41a"/><rect x="1.4" y="3.6" width="2.2" height="0.8" fill="#fff6b0"/><rect x="0" y="0.0" width="6.6" height="3.2" rx="1.5" fill="#4a2a00"/><rect x="0.6" y="0.6" width="5.4" height="1.9" rx="0.9" fill="#ffd41a"/><rect x="1.4" y="0.7" width="2.2" height="0.8" fill="#fff6b0"/></g><g transform="translate(553.4 40.2)"><rect x="0" y="2.9" width="6.6" height="3.2" rx="1.5" fill="#4a2a00"/><rect x="0.6" y="3.5" width="5.4" height="1.9" rx="0.9" fill="#ffd41a"/><rect x="1.4" y="3.6" width="2.2" height="0.8" fill="#fff6b0"/><rect x="0" y="0.0" width="6.6" height="3.2" rx="1.5" fill="#4a2a00"/><rect x="0.6" y="0.6" width="5.4" height="1.9" rx="0.9" fill="#ffd41a"/><rect x="1.4" y="0.7" width="2.2" height="0.8" fill="#fff6b0"/></g><g transform="translate(566.5 29.5)"><path d="M0.5 0.5 H7.5 L10.5 3.5 V12.5 H0.5 Z" fill="#ffffff" stroke="#2a80e0"/><path d="M7.5 0.5 V3.5 H10.5" fill="none" stroke="#2a80e0" stroke-width="0.7"/><path d="M2 5.5 H8.5" stroke="#40c0f0" stroke-width="0.9"/><path d="M2 7.5 H8.5" stroke="#40c0f0" stroke-width="0.9"/><path d="M2 9.5 H8.5" stroke="#40c0f0" stroke-width="0.9"/></g><g transform="translate(572 36)"><path d="M0.8 9.4 L9.4 0.8" stroke="#18a018" stroke-width="1.7"/><circle cx="2" cy="2.4" r="1.9" fill="#18a018"/><circle cx="8.2" cy="8" r="1.9" fill="#18a018"/></g><g transform="translate(589.5 29.5)"><path d="M0.5 0.5 H6.5 L9.5 3.5 V11.5 H0.5 Z" fill="#ffffff" stroke="#2a80e0"/><path d="M6.5 0.5 V3.5 H9.5" fill="none" stroke="#2a80e0" stroke-width="0.7"/><path d="M2 5.5 H7.5" stroke="#40c0f0" stroke-width="0.9"/><path d="M2 7.5 H7.5" stroke="#40c0f0" stroke-width="0.9"/><path d="M2 9.5 H7.5" stroke="#40c0f0" stroke-width="0.9"/></g><g transform="translate(596.5 30)"><path d="M0 10.5 V8 Q0 5.6 2.6 5.2 L4.5 6.8 L6.4 5.2 Q9 5.6 9 8 V10.5 Z" fill="#fa2424"/><path d="M0 10.5 V9 H9 V10.5 Z" fill="#a00808" opacity="0.55"/><path d="M3.2 5.2 L4.5 7 L5.8 5.2 Z" fill="#ffffff"/><circle cx="4.5" cy="3" r="2.5" fill="#5a1c0c"/><ellipse cx="4.5" cy="3.5" rx="1.7" ry="1.9" fill="#f9cfa6"/></g><g transform="translate(593 35.4)"><path d="M0 10.5 V8 Q0 5.6 2.6 5.2 L4.5 6.8 L6.4 5.2 Q9 5.6 9 8 V10.5 Z" fill="#2048e8"/><path d="M0 10.5 V9 H9 V10.5 Z" fill="#0a2aa0" opacity="0.55"/><path d="M3.2 5.2 L4.5 7 L5.8 5.2 Z" fill="#ffffff"/><circle cx="4.5" cy="3" r="2.5" fill="#5a1c0c"/><ellipse cx="4.5" cy="3.5" rx="1.7" ry="1.9" fill="#f9cfa6"/></g><g transform="translate(613.5 30)"><rect x="0.5" y="0.5" width="12" height="14.5" rx="2.2" fill="#34c048" stroke="#128a24"/><path d="M4 3.2 V12 M4 5 H8 M4 8.5 H8 M4 12 H8" stroke="#0a5a18" stroke-width="1.1" fill="none"/><rect x="2.6" y="2" width="3" height="2.4" fill="#0a5a18"/><rect x="7.4" y="3.8" width="2.8" height="2.4" fill="#0a5a18"/><rect x="7.4" y="7.3" width="2.8" height="2.4" fill="#0a5a18"/><rect x="7.4" y="10.8" width="2.8" height="2.4" fill="#0a5a18"/></g><path d="M634 43 h6 l-3 3.2 Z" fill="#4a3c10"/><rect x="650" y="31" width="3" height="1" fill="#c4bb92"/><rect x="650" y="33" width="3" height="1" fill="#c4bb92"/><rect x="650" y="35" width="3" height="1" fill="#c4bb92"/><rect x="650" y="37" width="3" height="1" fill="#c4bb92"/><rect x="650" y="39" width="3" height="1" fill="#c4bb92"/><rect x="650" y="41" width="3" height="1" fill="#c4bb92"/><rect x="650" y="43" width="3" height="1" fill="#c4bb92"/><g transform="translate(659 30)"><path d="M0.5 1.5 H8.5 L11.5 4.5 V13.5 H0.5 Z" fill="#fafafa" stroke="#b0b0b0"/><path d="M8 4 H3 L5.6 7.2 L3 10.5 H8" fill="none" stroke="#202020" stroke-width="1"/></g><g transform="translate(667 30)"><path d="M0 10.5 V8 Q0 5.6 2.6 5.2 L4.5 6.8 L6.4 5.2 Q9 5.6 9 8 V10.5 Z" fill="#2048e8"/><path d="M0 10.5 V9 H9 V10.5 Z" fill="#0a2aa0" opacity="0.55"/><path d="M3.2 5.2 L4.5 7 L5.8 5.2 Z" fill="#ffffff"/><circle cx="4.5" cy="3" r="2.5" fill="#5a1c0c"/><ellipse cx="4.5" cy="3.5" rx="1.7" ry="1.9" fill="#f9cfa6"/></g><g transform="translate(668 39.5)"><rect x="0" y="1" width="5.5" height="5.5" fill="#ff3030"/><path d="M0 1 L1.5 0 H7.0 L5.5 1Z" fill="#ff9090"/><path d="M5.5 1 L7.0 0 V5.0 L5.5 6.5Z" fill="#c00000"/></g><g transform="translate(682 30)"><path d="M0.5 1.5 H8.5 L11.5 4.5 V13.5 H0.5 Z" fill="#fafafa" stroke="#b0b0b0"/><path d="M8 4 H3 L5.6 7.2 L3 10.5 H8" fill="none" stroke="#202020" stroke-width="1"/></g><g transform="translate(690 30)"><path d="M0 10.5 V8 Q0 5.6 2.6 5.2 L4.5 6.8 L6.4 5.2 Q9 5.6 9 8 V10.5 Z" fill="#fa2424"/><path d="M0 10.5 V9 H9 V10.5 Z" fill="#a00808" opacity="0.55"/><path d="M3.2 5.2 L4.5 7 L5.8 5.2 Z" fill="#ffffff"/><circle cx="4.5" cy="3" r="2.5" fill="#5a1c0c"/><ellipse cx="4.5" cy="3.5" rx="1.7" ry="1.9" fill="#f9cfa6"/></g><g transform="translate(691.5 38.5)"><rect x="0" y="1" width="6" height="6" fill="#2a5ae8"/><path d="M0 1 L1.5 0 H7.5 L6 1Z" fill="#ff9090"/><path d="M6 1 L7.5 0 V5.5 L6 7Z" fill="#1030a0"/></g><g transform="translate(705 30)"><path d="M0.5 1.5 H8.5 L11.5 4.5 V13.5 H0.5 Z" fill="#fafafa" stroke="#b0b0b0"/><path d="M8 4 H3 L5.6 7.2 L3 10.5 H8" fill="none" stroke="#202020" stroke-width="1"/></g><g transform="translate(713.5 30.5)"><path d="M0 10.5 V8 Q0 5.6 2.6 5.2 L4.5 6.8 L6.4 5.2 Q9 5.6 9 8 V10.5 Z" fill="#2048e8"/><path d="M0 10.5 V9 H9 V10.5 Z" fill="#0a2aa0" opacity="0.55"/><path d="M3.2 5.2 L4.5 7 L5.8 5.2 Z" fill="#ffffff"/><circle cx="4.5" cy="3" r="2.5" fill="#5a1c0c"/><ellipse cx="4.5" cy="3.5" rx="1.7" ry="1.9" fill="#f9cfa6"/></g><g transform="translate(708.5 35.4)"><path d="M0 10.5 V8 Q0 5.6 2.6 5.2 L4.5 6.8 L6.4 5.2 Q9 5.6 9 8 V10.5 Z" fill="#fa2424"/><path d="M0 10.5 V9 H9 V10.5 Z" fill="#a00808" opacity="0.55"/><path d="M3.2 5.2 L4.5 7 L5.8 5.2 Z" fill="#ffffff"/><circle cx="4.5" cy="3" r="2.5" fill="#5a1c0c"/><ellipse cx="4.5" cy="3.5" rx="1.7" ry="1.9" fill="#f9cfa6"/></g><g transform="translate(728 30)"><path d="M0.5 1.5 H8.5 L11.5 4.5 V13.5 H0.5 Z" fill="#fafafa" stroke="#b0b0b0"/><path d="M8 4 H3 L5.6 7.2 L3 10.5 H8" fill="none" stroke="#202020" stroke-width="1"/></g><g transform="translate(737 30)"><rect x="0" y="1" width="6.5" height="6.5" fill="#ff3030"/><path d="M0 1 L1.5 0 H8.0 L6.5 1Z" fill="#ff9090"/><path d="M6.5 1 L8.0 0 V6.0 L6.5 7.5Z" fill="#c00000"/></g><g transform="translate(733.5 41.4)"><path d="M0 1 L1 0 H10.5 V3 L9.5 4 H0 Z" fill="#1c1cb4"/><path d="M1.6 2.4 H8.1" stroke="#ffe040" stroke-width="1.2" stroke-dasharray="1.2 1.2"/></g><g transform="translate(751 30)"><path d="M0.5 1.5 H8.5 L11.5 4.5 V13.5 H0.5 Z" fill="#fafafa" stroke="#b0b0b0"/><path d="M8 4 H3 L5.6 7.2 L3 10.5 H8" fill="none" stroke="#202020" stroke-width="1"/></g><path d="M761.5 31 V42" stroke="#5a3a10" stroke-width="1"/><g transform="translate(761.5 29)"><rect x="0" y="1" width="6" height="6" fill="#ff3030"/><path d="M0 1 L1.5 0 H7.5 L6 1Z" fill="#ff9090"/><path d="M6 1 L7.5 0 V5.5 L6 7Z" fill="#c00000"/></g><g transform="translate(759 41.4)"><path d="M0 1 L1 0 H7 V3 L6 4 H0 Z" fill="#f08838"/><path d="M1.6 2.4 H4.6" stroke="#ffe8c0" stroke-width="1.2" stroke-dasharray="1.2 1.2"/></g><g transform="translate(774 30)"><path d="M0.5 1.5 H8.5 L11.5 4.5 V13.5 H0.5 Z" fill="#fafafa" stroke="#b0b0b0"/><path d="M8 4 H3 L5.6 7.2 L3 10.5 H8" fill="none" stroke="#202020" stroke-width="1"/></g><g transform="translate(783.5 32)"><rect x="0" y="1" width="6.5" height="6.5" fill="#ff3030"/><path d="M0 1 L1.5 0 H8.0 L6.5 1Z" fill="#ff9090"/><path d="M6.5 1 L8.0 0 V6.0 L6.5 7.5Z" fill="#c00000"/></g><g transform="translate(780 41.4)"><path d="M0 1 L1 0 H10.5 V3 L9.5 4 H0 Z" fill="#2a7af0"/><path d="M1.6 2.4 H8.1" stroke="#ffffff" stroke-width="1.2" stroke-dasharray="1.2 1.2"/></g><g transform="translate(797 30)"><path d="M0.5 1.5 H8.5 L11.5 4.5 V13.5 H0.5 Z" fill="#fafafa" stroke="#b0b0b0"/><path d="M8 4 H3 L5.6 7.2 L3 10.5 H8" fill="none" stroke="#202020" stroke-width="1"/></g><g transform="translate(804 33)"><rect x="0.5" y="0.5" width="7.5" height="12.5" fill="#dcdcdc" stroke="#4a4a4a"/><path d="M1.5 2.5 H7.5 M1.5 4.5 H7.5 M1.5 6.5 H7.5 M1.5 8.5 H7.5 M1.5 10.5 H7.5" stroke="#3a3a3a" stroke-width="1"/></g><g transform="translate(820 30)"><path d="M0.5 1.5 H8.5 L11.5 4.5 V13.5 H0.5 Z" fill="#fafafa" stroke="#b0b0b0"/><path d="M8 4 H3 L5.6 7.2 L3 10.5 H8" fill="none" stroke="#202020" stroke-width="1"/></g><g transform="translate(827 35.5)"><path d="M0.5 3.5 L3.2 6.5 L8.5 0.8" fill="none" stroke="#28b428" stroke-width="2.2"/></g><path d="M842 43 h6 l-3 3.2 Z" fill="#4a3c10"/></svg>
<span class="t" style="top:4px;font-size:13.5px;line-height:17px;color:#b9b3a7;left:515px;font-weight:bold;transform:scaleX(0.9333);transform-origin:0 0;">M</span>
<span class="t" style="top:4px;font-size:13.5px;line-height:17px;color:#b9b3a7;left:535px;font-weight:bold;transform:scaleX(0.8882);transform-origin:0 0;">M+</span>
<span class="t" style="top:4px;font-size:13.5px;line-height:17px;color:#b9b3a7;left:558px;font-weight:bold;transform:scaleX(1.0159);transform-origin:0 0;">M-</span>
<div style="left:158px;top:2px;width:149px;height:19px;background:#fffdf2;border:1px solid #fff3bf;box-sizing:border-box;"></div>
<div style="left:159px;top:3px;width:118px;height:17px;background:#fffef8;"></div>
<div style="left:278px;top:3px;width:28px;height:17px;background:#ece7d8;"></div>
<div style="left:277px;top:3px;width:1px;height:17px;background:#fff3bf;"></div>
<div style="left:292px;top:3px;width:1px;height:17px;background:#fff3bf;"></div>
<svg style="left:281px;top:10px" width="8" height="4" viewBox="0 0 8 4"><path d="M0 0 H8 L4 4 Z" fill="#aaa69a"/></svg>
<svg style="left:295px;top:7px" width="9" height="9" viewBox="0 0 9 9"><path d="M1 1 L8 8 M8 1 L1 8" stroke="#b1ad9f" stroke-width="1.6"/></svg>
<div style="left:0px;top:77px;width:15px;height:23px;background:#ece6da;"></div>
<div style="left:0px;top:100px;width:15px;height:1px;background:#b3ac86;"></div>
<div style="left:0px;top:101px;width:15px;height:9px;background:#fffcf2;"></div>
<div style="left:0px;top:109px;width:15px;height:1px;background:#b3ac86;"></div>
<div style="left:0px;top:110px;width:15px;height:20px;background:#d0ccb6;"></div>
<div style="left:0px;top:130px;width:15px;height:1px;background:#b3ac86;"></div>
<div style="left:0px;top:131px;width:15px;height:636px;background:#ffffff;"></div>
<div style="left:0px;top:149px;width:15px;height:1px;background:#c6bf9c;"></div>
<span class="t" style="top:133px;font-size:12px;line-height:16px;color:#000;right:935.1px;transform:scaleX(0.9250);transform-origin:100% 0;">24:</span>
<div style="left:0px;top:168px;width:15px;height:1px;background:#c6bf9c;"></div>
<span class="t" style="top:152px;font-size:12px;line-height:16px;color:#000;right:935.1px;transform:scaleX(0.9250);transform-origin:100% 0;">8:0</span>
<div style="left:0px;top:187px;width:15px;height:1px;background:#c6bf9c;"></div>
<span class="t" style="top:171px;font-size:12px;line-height:16px;color:#000;right:935.1px;transform:scaleX(0.9250);transform-origin:100% 0;">5:3</span>
<div style="left:0px;top:206px;width:15px;height:1px;background:#c6bf9c;"></div>
<span class="t" style="top:190px;font-size:12px;line-height:16px;color:#000;right:935.1px;transform:scaleX(0.9250);transform-origin:100% 0;">7:1</span>
<div style="left:0px;top:225px;width:15px;height:1px;background:#c6bf9c;"></div>
<span class="t" style="top:209px;font-size:12px;line-height:16px;color:#000;right:935.1px;transform:scaleX(0.9250);transform-origin:100% 0;">8:3</span>
<div style="left:0px;top:244px;width:15px;height:1px;background:#c6bf9c;"></div>
<span class="t" style="top:228px;font-size:12px;line-height:16px;color:#000;right:935.1px;transform:scaleX(0.9250);transform-origin:100% 0;">07:</span>
<div style="left:0px;top:263px;width:15px;height:1px;background:#c6bf9c;"></div>
<span class="t" style="top:247px;font-size:12px;line-height:16px;color:#000;right:935.1px;transform:scaleX(0.9250);transform-origin:100% 0;">34:</span>
<div style="left:0px;top:264px;width:15px;height:18px;background:#4a60c4;"></div>
<div style="left:0px;top:282px;width:15px;height:1px;background:#c6bf9c;"></div>
<span class="t" style="top:266px;font-size:12px;line-height:16px;color:#fff;right:935.1px;transform:scaleX(0.9250);transform-origin:100% 0;">45:</span>
<div style="left:0px;top:301px;width:15px;height:1px;background:#c6bf9c;"></div>
<span class="t" style="top:285px;font-size:12px;line-height:16px;color:#000;right:935.1px;transform:scaleX(0.9250);transform-origin:100% 0;">09:</span>
<div style="left:0px;top:320px;width:15px;height:1px;background:#c6bf9c;"></div>
<span class="t" style="top:304px;font-size:12px;line-height:16px;color:#000;right:935.1px;transform:scaleX(0.9250);transform-origin:100% 0;">21:</span>
<div style="left:0px;top:339px;width:15px;height:1px;background:#c6bf9c;"></div>
<span class="t" style="top:323px;font-size:12px;line-height:16px;color:#000;right:935.1px;transform:scaleX(0.9250);transform-origin:100% 0;">03:</span>
<div style="left:0px;top:358px;width:15px;height:1px;background:#c6bf9c;"></div>
<span class="t" style="top:342px;font-size:12px;line-height:16px;color:#000;right:935.1px;transform:scaleX(0.9250);transform-origin:100% 0;">02:</span>
<div style="left:0px;top:377px;width:15px;height:1px;background:#c6bf9c;"></div>
<span class="t" style="top:361px;font-size:12px;line-height:16px;color:#000;right:935.1px;transform:scaleX(0.9250);transform-origin:100% 0;">13:</span>
<div style="left:0px;top:396px;width:15px;height:1px;background:#c6bf9c;"></div>
<span class="t" style="top:380px;font-size:12px;line-height:16px;color:#000;right:935.1px;transform:scaleX(0.9250);transform-origin:100% 0;">53:</span>
<div style="left:0px;top:396px;width:15px;height:19px;background:#3cb371;"></div>
<div style="left:0px;top:415px;width:15px;height:1px;background:#c6bf9c;"></div>
<span class="t" style="top:399px;font-size:12px;line-height:16px;color:#000;right:935.1px;transform:scaleX(0.9250);transform-origin:100% 0;">28:</span>
<div style="left:0px;top:434px;width:15px;height:1px;background:#c6bf9c;"></div>
<span class="t" style="top:418px;font-size:12px;line-height:16px;color:#000;right:935.1px;transform:scaleX(0.9250);transform-origin:100% 0;">43:</span>
<div style="left:0px;top:453px;width:15px;height:1px;background:#c6bf9c;"></div>
<span class="t" style="top:437px;font-size:12px;line-height:16px;color:#000;right:935.1px;transform:scaleX(0.9250);transform-origin:100% 0;">29:</span>
<div style="left:0px;top:453px;width:15px;height:19px;background:#3cb371;"></div>
<div style="left:0px;top:472px;width:15px;height:1px;background:#c6bf9c;"></div>
<span class="t" style="top:456px;font-size:12px;line-height:16px;color:#000;right:935.1px;transform:scaleX(0.9250);transform-origin:100% 0;">07:</span>
<div style="left:0px;top:491px;width:15px;height:1px;background:#c6bf9c;"></div>
<span class="t" style="top:475px;font-size:12px;line-height:16px;color:#000;right:935.1px;transform:scaleX(0.9250);transform-origin:100% 0;">02:</span>
<div style="left:0px;top:491px;width:15px;height:19px;background:#3cb371;"></div>
<div style="left:0px;top:510px;width:15px;height:1px;background:#c6bf9c;"></div>
<span class="t" style="top:494px;font-size:12px;line-height:16px;color:#000;right:935.1px;transform:scaleX(0.9250);transform-origin:100% 0;">13:</span>
<div style="left:0px;top:510px;width:15px;height:19px;background:#3cb371;"></div>
<div style="left:0px;top:529px;width:15px;height:1px;background:#c6bf9c;"></div>
<span class="t" style="top:513px;font-size:12px;line-height:16px;color:#000;right:935.1px;transform:scaleX(0.9250);transform-origin:100% 0;">40:</span>
<div style="left:0px;top:548px;width:15px;height:1px;background:#c6bf9c;"></div>
<span class="t" style="top:532px;font-size:12px;line-height:16px;color:#000;right:935.1px;transform:scaleX(0.9250);transform-origin:100% 0;">51:</span>
<div style="left:0px;top:567px;width:15px;height:1px;background:#c6bf9c;"></div>
<span class="t" style="top:551px;font-size:12px;line-height:16px;color:#000;right:935.1px;transform:scaleX(0.9250);transform-origin:100% 0;">0:0</span>
<div style="left:0px;top:586px;width:15px;height:1px;background:#c6bf9c;"></div>
<span class="t" style="top:570px;font-size:12px;line-height:16px;color:#000;right:935.1px;transform:scaleX(0.9250);transform-origin:100% 0;">2:1</span>
<div style="left:0px;top:605px;width:15px;height:1px;background:#c6bf9c;"></div>
<span class="t" style="top:589px;font-size:12px;line-height:16px;color:#000;right:935.1px;transform:scaleX(0.9250);transform-origin:100% 0;">8:1</span>
<div style="left:0px;top:624px;width:15px;height:1px;background:#c6bf9c;"></div>
<span class="t" style="top:608px;font-size:12px;line-height:16px;color:#000;right:935.1px;transform:scaleX(0.9250);transform-origin:100% 0;">2:4</span>
<div style="left:0px;top:643px;width:15px;height:1px;background:#c6bf9c;"></div>
<span class="t" style="top:627px;font-size:12px;line-height:16px;color:#000;right:935.1px;transform:scaleX(0.9250);transform-origin:100% 0;">3:2</span>
<div style="left:0px;top:662px;width:15px;height:1px;background:#c6bf9c;"></div>
<span class="t" style="top:646px;font-size:12px;line-height:16px;color:#000;right:935.1px;transform:scaleX(0.9250);transform-origin:100% 0;">5:1</span>
<div style="left:0px;top:681px;width:15px;height:1px;background:#c6bf9c;"></div>
<span class="t" style="top:665px;font-size:12px;line-height:16px;color:#000;right:935.1px;transform:scaleX(0.9250);transform-origin:100% 0;">7:1</span>
<div style="left:0px;top:681px;width:15px;height:19px;background:#3cb371;"></div>
<div style="left:0px;top:700px;width:15px;height:1px;background:#c6bf9c;"></div>
<span class="t" style="top:684px;font-size:12px;line-height:16px;color:#000;right:935.1px;transform:scaleX(0.9250);transform-origin:100% 0;">1:2</span>
<div style="left:0px;top:719px;width:15px;height:1px;background:#c6bf9c;"></div>
<span class="t" style="top:703px;font-size:12px;line-height:16px;color:#000;right:935.1px;transform:scaleX(0.9250);transform-origin:100% 0;">8:1</span>
<div style="left:0px;top:738px;width:15px;height:1px;background:#c6bf9c;"></div>
<span class="t" style="top:722px;font-size:12px;line-height:16px;color:#000;right:935.1px;transform:scaleX(0.9250);transform-origin:100% 0;">40:</span>
<div style="left:0px;top:757px;width:15px;height:1px;background:#c6bf9c;"></div>
<span class="t" style="top:741px;font-size:12px;line-height:16px;color:#000;right:935.1px;transform:scaleX(0.9250);transform-origin:100% 0;">43:</span>
<div style="left:0px;top:757px;width:15px;height:19px;background:#3cb371;"></div>
<div style="left:0px;top:776px;width:15px;height:1px;background:#c6bf9c;"></div>
<span class="t" style="top:760px;font-size:12px;line-height:16px;color:#000;right:935.1px;transform:scaleX(0.9250);transform-origin:100% 0;">50:</span>
<svg style="left:4px;top:81px" width="12" height="14" viewBox="0 0 12 14"><path d="M1.2 10 L7.6 1.6 Q9 0.6 10.2 1.8 L11.4 3 Q12 4 11.2 5 L4.6 12.6 Z" fill="#2aa214"/><path d="M2.4 9.4 L8.4 1.8 L10 3.2 L4 10.8 Z" fill="#66e048"/><path d="M1.2 10 L4.6 12.6 L0.8 13.4 Z" fill="#ffffff"/><path d="M0.8 13.4 L2 13.1 L1.1 12.1Z" fill="#1a6a0a"/></svg>
<div style="left:15px;top:76px;width:1px;height:691px;background:#f0f0f0;"></div>
<div style="left:16px;top:77px;width:2px;height:690px;background:#b4b4b4;"></div>
<div style="left:18px;top:98px;width:1px;height:669px;background:#707070;"></div>
<div style="left:18px;top:98px;width:931px;height:1px;background:#707070;"></div>
<svg style="left:21px;top:81px" width="14" height="14" viewBox="0 0 14 14"><rect x="0.5" y="0.5" width="12.5" height="13" fill="#f4f8fc" stroke="#8fa7c4"/><path d="M3 3.5 H10.5 M3 5.5 H10.5 M3 7.5 H10.5 M3 9.5 H10.5 M3 11.5 H10.5" stroke="#b9cbe0" stroke-width="1"/></svg>
<span class="t" style="top:82px;font-size:11.5px;line-height:14px;color:#5e5e5e;left:41.5px;font-weight:bold;transform:scaleX(1.0626);transform-origin:0 0;">Заказ покупателя: Проведен *</span>
<div style="left:19px;top:99px;width:930px;height:24px;background:#ece6da;"></div>
<div style="left:19px;top:123px;width:930px;height:1px;background:#b3ac86;"></div>
<span class="t" style="top:104px;font-size:12px;line-height:16px;color:#3d2d00;left:23.5px;transform:scaleX(0.9065);transform-origin:0 0;">Цены и валюта...</span>
<div style="left:116px;top:102px;width:1px;height:19px;background:#c9c2a4;"></div>
<div style="left:117px;top:102px;width:1px;height:19px;background:#fbf8ee;"></div>
<span class="t" style="top:104px;font-size:12px;line-height:16px;color:#3d2d00;left:124px;transform:scaleX(0.9415);transform-origin:0 0;">Действия</span>
<svg style="left:178px;top:109px" width="6" height="4" viewBox="0 0 6 4"><path d="M0 0 H6 L3 3.3 Z" fill="#4a3c10"/></svg>
<div style="left:187px;top:102px;width:1px;height:19px;background:#c9c2a4;"></div>
<div style="left:188px;top:102px;width:1px;height:19px;background:#fbf8ee;"></div>
<svg style="left:0;top:0" width="949" height="124" viewBox="0 0 949 124"><g transform="translate(194 103)"><rect x="0.5" y="0.5" width="11" height="13" fill="#fbfdff" stroke="#7a98c0"/><path d="M2.5 3.5 H9.5 M2.5 6.5 H9.5" stroke="#9ab4d8" stroke-width="0.9"/><path d="M4 11 L8 7.5 V9.5 H14 V12.5 H8 V14.5Z" fill="#2a68c0"/></g><g transform="translate(223 105)"><rect x="0.5" y="0.5" width="13" height="12" fill="#fff" stroke="#3a68a8"/><rect x="0.5" y="0.5" width="13" height="2.5" fill="#3a68a8"/><circle cx="7" cy="8" r="3" fill="none" stroke="#30a030" stroke-width="1.6"/></g><g transform="translate(246 104)"><rect x="0.5" y="0.5" width="9" height="11" fill="#f4f8fc" stroke="#8aa0c0"/><rect x="3.5" y="2.5" width="9" height="11" fill="#fff" stroke="#8aa0c0"/><circle cx="10" cy="11" r="3.5" fill="#40b040"/></g><g transform="translate(273 103)"><rect x="0.5" y="1.5" width="10" height="13" fill="#fff" stroke="#8aa0c0"/><path d="M2.5 5 H8 M2.5 7 H8" stroke="#8aa8d0"/><path d="M4 3 H9 V0.5 L13.5 4.5 L9 8.5 V6 H4Z" fill="#28a828" stroke="#107010" stroke-width="0.6"/></g><g transform="translate(296 103)"><rect x="0.5" y="1.5" width="11" height="13" fill="#fff" stroke="#8aa0c0"/><path d="M12 6 Q12 2.5 7.5 3 V0.5 L2.5 4.5 L7.5 8.5 V6 Q10 5.5 10 9Z" fill="#e02020" stroke="#900" stroke-width="0.6"/></g><g transform="translate(325 105)"><rect x="0.5" y="0.5" width="8" height="11" fill="#dfe8f4" stroke="#8aa0c0"/><rect x="4.5" y="2.5" width="8" height="11" fill="#3a78d0" stroke="#28508a"/></g><path d="M341 109 h6 l-3 3.2 Z" fill="#4a3c10"/><defs><radialGradient id="gq" cx="0.4" cy="0.3" r="0.9"><stop offset="0" stop-color="#fff4d8"/><stop offset="0.55" stop-color="#f2c47a"/><stop offset="1" stop-color="#d08a30"/></radialGradient></defs><g transform="translate(424 103)"><circle cx="7.5" cy="7.5" r="7" fill="url(#gq)" stroke="#c89048" stroke-width="0.8"/><path d="M5 5.5 Q5 3 7.5 3 Q10 3 10 5.2 Q10 7 7.5 7.8 V9.5" fill="none" stroke="#8a5a10" stroke-width="1.6"/></g><g transform="translate(445 103)"><rect x="0.5" y="0.5" width="16" height="5" fill="#fff" stroke="#707070"/><rect x="12.5" y="0.5" width="4" height="5" fill="#d0d0d0" stroke="#505050"/><rect x="0.5" y="7.5" width="16" height="5" fill="#fff" stroke="#707070"/></g><g transform="translate(469 103)"><rect x="0.5" y="0.5" width="6" height="6" fill="#fff" stroke="#202020"/><path d="M1.8 3.5 L3.2 5 L5.4 1.8" stroke="#000" fill="none" stroke-width="1.2"/><rect x="9" y="1" width="8" height="2.4" fill="#2a68d0"/><rect x="9" y="6" width="5" height="2.4" fill="#2a68d0"/></g><g transform="translate(499 103)"><circle cx="6.5" cy="8" r="5.5" fill="#e8eef8" stroke="#6a88b8" stroke-width="1.2"/><ellipse cx="6.5" cy="2.5" rx="4" ry="2" fill="#f0c84a" stroke="#a88420" stroke-width="0.7"/></g></svg>
<div style="left:215px;top:102px;width:1px;height:19px;background:#c9c2a4;"></div>
<div style="left:216px;top:102px;width:1px;height:19px;background:#fbf8ee;"></div>
<div style="left:266px;top:102px;width:1px;height:19px;background:#c9c2a4;"></div>
<div style="left:267px;top:102px;width:1px;height:19px;background:#fbf8ee;"></div>
<div style="left:317px;top:102px;width:1px;height:19px;background:#c9c2a4;"></div>
<div style="left:318px;top:102px;width:1px;height:19px;background:#fbf8ee;"></div>
<div style="left:352px;top:102px;width:1px;height:19px;background:#c9c2a4;"></div>
<div style="left:353px;top:102px;width:1px;height:19px;background:#fbf8ee;"></div>
<span class="t" style="top:104px;font-size:12px;line-height:16px;color:#3d2d00;left:359.5px;transform:scaleX(0.9251);transform-origin:0 0;">Перейти</span>
<svg style="left:406px;top:109px" width="6" height="4" viewBox="0 0 6 4"><path d="M0 0 H6 L3 3.3 Z" fill="#4a3c10"/></svg>
<div style="left:416px;top:102px;width:1px;height:19px;background:#c9c2a4;"></div>
<div style="left:417px;top:102px;width:1px;height:19px;background:#fbf8ee;"></div>
<div style="left:491px;top:102px;width:1px;height:19px;background:#c9c2a4;"></div>
<div style="left:492px;top:102px;width:1px;height:19px;background:#fbf8ee;"></div>
<div style="left:518px;top:102px;width:1px;height:19px;background:#c9c2a4;"></div>
<div style="left:519px;top:102px;width:1px;height:19px;background:#fbf8ee;"></div>
<span class="t" style="top:104px;font-size:12px;line-height:16px;color:#3d2d00;left:526.5px;transform:scaleX(0.9331);transform-origin:0 0;">Заполнить и провести</span>
<div style="left:646px;top:102px;width:1px;height:19px;background:#c9c2a4;"></div>
<div style="left:647px;top:102px;width:1px;height:19px;background:#fbf8ee;"></div>
<span class="t" style="top:104px;font-size:12px;line-height:16px;color:#3d2d00;left:653.5px;transform:scaleX(0.9009);transform-origin:0 0;">Анализ</span>
<div style="left:696px;top:102px;width:1px;height:19px;background:#c9c2a4;"></div>
<div style="left:697px;top:102px;width:1px;height:19px;background:#fbf8ee;"></div>
<span class="t" style="top:104px;font-size:12px;line-height:16px;color:#3d2d00;left:703.5px;transform:scaleX(0.9254);transform-origin:0 0;">Оформить документы</span>
<svg style="left:818px;top:109px" width="6" height="4" viewBox="0 0 6 4"><path d="M0 0 H6 L3 3.3 Z" fill="#4a3c10"/></svg>
<div style="left:828px;top:102px;width:1px;height:19px;background:#c9c2a4;"></div>
<div style="left:829px;top:102px;width:1px;height:19px;background:#fbf8ee;"></div>
<span class="t" style="top:104px;font-size:12px;line-height:16px;color:#3d2d00;left:838.5px;transform:scaleX(0.9439);transform-origin:0 0;">Файлы</span>
<span class="t" style="top:133px;font-size:12px;line-height:16px;color:#3d2d00;left:27px;transform:scaleX(0.9185);transform-origin:0 0;">Номер:</span>
<div style="left:109px;top:131px;width:120px;height:19px;background:#ffffff;border:1px solid #b3ac86;box-sizing:border-box;"></div>
<div style="left:112px;top:134px;width:114px;height:13px;background:#fffbf0;"></div>
<span class="t" style="top:133px;font-size:12px;line-height:16px;color:#000;left:111.5px;transform:scaleX(0.9097);transform-origin:0 0;">A0000038957</span>
<div style="left:700px;top:131px;width:300px;height:19px;background:#ffffff;border:1px solid #b3ac86;box-sizing:border-box;"></div>
<span class="t" style="top:157px;font-size:12px;line-height:16px;color:#3d2d00;left:27px;transform:scaleX(0.9245);transform-origin:0 0;">Организация:</span>
<div style="left:109px;top:155px;width:860px;height:19px;background:#ffffff;border:1px solid #b3ac86;box-sizing:border-box;"></div>
<span class="t" style="top:157px;font-size:12px;line-height:16px;color:#000;left:112px;transform:scaleX(0.9473);transform-origin:0 0;">ИП Коротков Алекс</span>
<span class="t" style="top:156px;font-size:12px;line-height:16px;color:#000;left:876.5px;transform:scaleX(0.8578);transform-origin:0 0;">й р-н, Большер</span>
<span class="t" style="top:181px;font-size:12px;line-height:16px;color:#3d2d00;left:27px;transform:scaleX(0.9329);transform-origin:0 0;">Контрагент:</span>
<div style="left:109px;top:179px;width:300px;height:19px;background:#ffffff;border:1px solid #b3ac86;box-sizing:border-box;"></div>
<span class="t" style="top:181px;font-size:12px;line-height:16px;color:#000;left:112px;transform:scaleX(0.9216);transform-origin:0 0;">Неворотов Иван Вл</span>
<div style="left:700px;top:179px;width:238px;height:19px;background:#fffbf0;border:1px solid #b3ac86;box-sizing:border-box;"></div>
<div style="left:922px;top:180px;width:15px;height:17px;background:#ece6d8;"></div>
<div style="left:922px;top:180px;width:1px;height:17px;background:#b3ac86;"></div>
<div style="left:926px;top:191px;width:2px;height:2px;background:#9c9364;"></div>
<div style="left:929px;top:191px;width:2px;height:2px;background:#9c9364;"></div>
<div style="left:932px;top:191px;width:2px;height:2px;background:#9c9364;"></div>
<div style="left:926px;top:191px;width:2px;height:2px;background:#000;"></div>
<div style="left:929px;top:191px;width:2px;height:2px;background:#000;"></div>
<div style="left:932px;top:191px;width:2px;height:2px;background:#000;"></div>
<span class="t" style="top:181px;font-size:12px;line-height:16px;color:#000;left:947px;font-weight:bold;">Н</span>
<span class="t" style="top:205px;font-size:12px;line-height:16px;color:#3d2d00;left:27px;transform:scaleX(0.9378);transform-origin:0 0;">Отгрузка:</span>
<div style="left:109px;top:203px;width:860px;height:19px;background:#ffffff;border:1px solid #b3ac86;box-sizing:border-box;"></div>
<span class="t" style="top:205px;font-size:12px;line-height:16px;color:#000;left:112px;transform:scaleX(0.9074);transform-origin:0 0;">16.03.2020</span>
<div style="left:27px;top:246px;width:922px;height:1px;background:#b3ac86;"></div>
<div style="left:27px;top:246px;width:1px;height:312px;background:#b3ac86;"></div>
<div style="left:27px;top:557px;width:922px;height:1px;background:#b3ac86;"></div>
<div style="left:131px;top:228px;width:120px;height:19px;background:#ece7d2;border:1px solid #b3ac86;box-sizing:border-box;border-radius:6px 6px 0 0;"></div>
<span class="t" style="top:230px;font-size:12px;line-height:16px;color:#3d2d00;left:141.5px;transform:scaleX(0.9549);transform-origin:0 0;">Услуги (0 поз</span>
<div style="left:27px;top:228px;width:98px;height:19px;background:#fffbf0;border:1px solid #b3ac86;box-sizing:border-box;border-radius:6px 6px 0 0;border-bottom:none;"></div>
<div style="left:30px;top:229px;width:92px;height:2px;background:#f9d88e;border-radius:3px 3px 0 0;"></div>
<span class="t" style="top:230px;font-size:12px;line-height:16px;color:#3d2d00;left:37.5px;transform:scaleX(0.9349);transform-origin:0 0;">Товары (2 поз.)</span>
<div style="left:870px;top:228px;width:90px;height:19px;background:#efe9d1;border:1px solid #d8d2b4;box-sizing:border-box;"></div>
<span class="t" style="top:230px;font-size:12px;line-height:16px;color:#3d2d00;left:880px;transform:scaleX(0.9250);transform-origin:0 0;">Не актуально</span>
<svg style="left:0;top:0" width="212" height="272" viewBox="0 0 212 272"><defs><radialGradient id="gp" cx="0.4" cy="0.3" r="0.9"><stop offset="0" stop-color="#d8f4c8"/><stop offset="0.6" stop-color="#62c24e"/><stop offset="1" stop-color="#3a9a2c"/></radialGradient><linearGradient id="gdn" x1="0" y1="0" x2="0" y2="1"><stop offset="0" stop-color="#b4d8f8"/><stop offset="1" stop-color="#3a88e0"/></linearGradient></defs><g transform="translate(38 251)"><circle cx="8" cy="8" r="7.4" fill="url(#gp)" stroke="#8c9c7c" stroke-width="1.2"/><path d="M8 4 V12 M4 8 H12" stroke="#fff" stroke-width="2.2"/></g><g transform="translate(61.5 252.5)"><path d="M0.5 0.5 H7 L10 3.5 V12.5 H0.5 Z" fill="#f6f9fd" stroke="#8a9cb8"/><path d="M2.5 3.5 H6 M2.5 5.5 H8 M2.5 7.5 H8 M2.5 9.5 H5" stroke="#a8bad4" stroke-width="0.9"/><circle cx="10.6" cy="10.4" r="4.3" fill="#5cc04a" stroke="#8aa47c" stroke-width="0.9"/><path d="M10.6 8 V12.8 M8.2 10.4 H13" stroke="#fff" stroke-width="1.5"/></g><g transform="translate(85.5 253)"><path d="M1.2 8.6 L7.8 1 Q9 0.2 10.2 1.2 L11.8 2.8 Q12.6 4 11.6 5.2 L4.8 12 Z" fill="#2a9e16"/><path d="M2.6 8.4 L8.6 1.6 L10.4 3.2 L4.2 10 Z" fill="#62dc44"/><path d="M1.2 8.6 L4.8 12 L0.4 12.4 Z" fill="#ffffff"/><path d="M0.4 12.4 L1.8 12.3 L0.8 11.2Z" fill="#1a6a0a"/></g><g transform="translate(109 254)"><path d="M1.4 1.4 L10 9.8 M10 1.4 L1.4 9.8" stroke="#e2584a" stroke-width="2.6" stroke-linecap="round"/><path d="M2 2 L9.4 9.2 M9.4 2 L2 9.2" stroke="#f4a496" stroke-width="0.9" stroke-linecap="round"/></g><g transform="translate(130 251)"><rect x="0.5" y="0.5" width="14" height="14" rx="1" fill="#a9bcdc" stroke="#6f88b4"/><rect x="2.5" y="1" width="10" height="5.4" fill="#f2f6fb"/><path d="M3.5 3 H11.5" stroke="#b8c8e0"/><rect x="3" y="9" width="6" height="5" fill="#e4eaf4"/><text x="8" y="15.2" font-family="Liberation Sans,sans-serif" font-size="7.5" font-weight="bold" fill="#181818" textLength="7.5" lengthAdjust="spacingAndGlyphs">ок</text></g><g transform="translate(154 253.5)"><path d="M6.7 0.4 L13 6.6 H9.8 V11.2 H3.6 V6.6 H0.4 Z" fill="#b8c0c8" stroke="#a4acb4" stroke-width="0.8"/></g><g transform="translate(177 253.3)"><path d="M6.7 11.4 L13 5.2 H9.8 V0.5 H3.6 V5.2 H0.4 Z" fill="url(#gdn)" stroke="#3c84d8" stroke-width="0.9"/></g><g transform="translate(200.5 250)"><text x="0" y="8.4" font-family="Liberation Serif,serif" font-size="10.5" font-weight="bold" fill="#2858b8">А</text><text x="0" y="16.6" font-family="Liberation Serif,serif" font-size="10.5" font-weight="bold" fill="#c02818">Я</text><path d="M7.6 13.6 h3.4 l-1.7 2 Z" fill="#404040"/></g></svg>
<div style="left:34px;top:271px;width:915px;height:264px;background:#ffffff;"></div>
<div style="left:34px;top:271px;width:915px;height:1px;background:#b3ac86;"></div>
<div style="left:34px;top:271px;width:1px;height:280px;background:#b3ac86;"></div>
<div style="left:35px;top:272px;width:914px;height:20px;background:#f5f2df;"></div>
<div style="left:63px;top:272px;width:760px;height:20px;background:#d6d2b7;"></div>
<div style="left:34px;top:292px;width:915px;height:1px;background:#b3ac86;"></div>
<div style="left:62px;top:272px;width:1px;height:59px;background:#b3ac86;"></div>
<div style="left:887px;top:272px;width:1px;height:59px;background:#b3ac86;"></div>
<div style="left:937px;top:272px;width:1px;height:59px;background:#b3ac86;"></div>
<div style="left:35px;top:311px;width:914px;height:1px;background:#c6bf9c;"></div>
<div style="left:35px;top:330px;width:914px;height:1px;background:#c6bf9c;"></div>
<span class="t" style="top:274px;font-size:12px;line-height:16px;color:#3d2d00;left:39px;transform:scaleX(0.7767);transform-origin:0 0;">№</span>
<span class="t" style="top:274px;font-size:12px;line-height:16px;color:#3d2d00;left:67px;transform:scaleX(0.9189);transform-origin:0 0;">Номенклатура</span>
<span class="t" style="top:274px;font-size:12px;line-height:16px;color:#3d2d00;left:892.5px;transform:scaleX(1.0651);transform-origin:0 0;">К.</span>
<span class="t" style="top:274px;font-size:12px;line-height:16px;color:#3d2d00;left:942px;transform:scaleX(0.9250);transform-origin:0 0;">Ц</span>
<span class="t" style="top:294px;font-size:12px;line-height:16px;color:#000;left:52px;transform:scaleX(0.9250);transform-origin:0 0;">1</span>
<span class="t" style="top:294px;font-size:12px;line-height:16px;color:#000;left:65px;transform:scaleX(0.9368);transform-origin:0 0;">Упор крышки багажника (Ам</span>
<span class="t" style="top:314px;font-size:12px;line-height:16px;color:#000;left:52.5px;transform:scaleX(0.9250);transform-origin:0 0;">2</span>
<span class="t" style="top:314px;font-size:12px;line-height:16px;color:#000;left:67px;transform:scaleX(0.9184);transform-origin:0 0;">Почта России</span>
<span class="t" style="top:295px;font-size:12px;line-height:16px;color:#000;left:906.5px;transform:scaleX(0.8991);transform-origin:0 0;">1,000</span>
<span class="t" style="top:314px;font-size:12px;line-height:16px;color:#000;left:906.5px;transform:scaleX(0.8991);transform-origin:0 0;">1,000</span>
<div style="left:35px;top:535px;width:914px;height:15px;background:linear-gradient(#fbf9ee,#ebe6c8)"></div>
<div style="left:34px;top:534px;width:915px;height:1px;background:#b3ac86;"></div>
<div style="left:34px;top:550px;width:915px;height:1px;background:#b3ac86;"></div>
<div style="left:55px;top:535px;width:1px;height:15px;background:#b3ac86;"></div>
<svg style="left:41px;top:538px" width="8" height="9" viewBox="0 0 8 9"><path d="M7 0.5 V8.5 L1 4.5 Z" fill="#c2beb0"/></svg>
<div style="left:877px;top:535px;width:72px;height:15px;background:linear-gradient(#f2edd0,#d9d2a4)"></div>
<span class="t" style="top:565px;font-size:12px;line-height:16px;color:#3d2d00;left:27px;transform:scaleX(0.9385);transform-origin:0 0;">Тип доставки:</span>
<div style="left:149px;top:563px;width:820px;height:19px;background:#ffffff;border:1px solid #b3ac86;box-sizing:border-box;"></div>
<span class="t" style="top:565px;font-size:12px;line-height:16px;color:#000;left:154px;transform:scaleX(0.9381);transform-origin:0 0;">Почта России</span>
<span class="t" style="top:587px;font-size:12px;line-height:16px;color:#3d2d00;left:27px;transform:scaleX(0.9313);transform-origin:0 0;">Комментарий:</span>
<div style="left:149px;top:585px;width:820px;height:19px;background:#ffffff;border:1px solid #b3ac86;box-sizing:border-box;"></div>
<span class="t" style="top:609px;font-size:12px;line-height:16px;color:#3d2d00;left:27px;transform:scaleX(0.9170);transform-origin:0 0;">Дата дополнительная:</span>
<div style="left:149px;top:607px;width:121px;height:19px;background:#ffffff;border:1px solid #b3ac86;box-sizing:border-box;"></div>
<div style="left:255px;top:608px;width:14px;height:17px;background:#ece6d8;"></div>
<div style="left:255px;top:608px;width:1px;height:17px;background:#b3ac86;"></div>
<svg style="left:258px;top:612px" width="9" height="9" viewBox="0 0 9 9"><rect x="0" y="0" width="9" height="9" fill="#222"/><path d="M1 3 H8 M1 5 H8 M1 7 H8 M3 2 V8 M5 2 V8 M7 2 V8" stroke="#fff" stroke-width="1" shape-rendering="crispEdges"/></svg>
<span class="t" style="top:609px;font-size:12px;line-height:16px;color:#000;left:153.5px;transform:scaleX(0.8991);transform-origin:0 0;">01.03.2020 10:45:22</span>
<span class="t" style="top:633px;font-size:12px;line-height:16px;color:#3d2d00;left:27px;transform:scaleX(0.9674);transform-origin:0 0;">Документ</span>
<div style="left:149px;top:631px;width:820px;height:19px;background:#ffffff;border:1px solid #b3ac86;box-sizing:border-box;"></div>
<div style="left:150px;top:647px;width:810px;height:0;border-top:1px dotted #e03030"></div>
<svg style="left:27px;top:659px" width="13" height="13" viewBox="0 0 12 12"><rect x="0.5" y="0.5" width="11" height="11" rx="2.2" fill="#fff" stroke="#9a9474"/></svg>
<span class="t" style="top:658px;font-size:12px;line-height:16px;color:#3d2d00;left:42px;transform:scaleX(0.9153);transform-origin:0 0;">Статус отправлен</span>
<svg style="left:150px;top:659px" width="13" height="13" viewBox="0 0 12 12"><rect x="0.5" y="0.5" width="11" height="11" rx="2.2" fill="#fff" stroke="#9a9474"/></svg>
<span class="t" style="top:658px;font-size:12px;line-height:16px;color:#3d2d00;left:165px;transform:scaleX(0.9290);transform-origin:0 0;">Проверять поставщика номенклатуры</span>
<svg style="left:805px;top:651px" width="13" height="13" viewBox="0 0 12 12"><rect x="0.5" y="0.5" width="11" height="11" rx="2.2" fill="#fff" stroke="#9a9474"/></svg>
<span class="t" style="top:650px;font-size:12px;line-height:16px;color:#3d2d00;left:822px;transform:scaleX(0.9281);transform-origin:0 0;">Разнарядка</span>
<div style="left:19px;top:682px;width:930px;height:24px;background:#ebe5da;"></div>
<div style="left:19px;top:681px;width:930px;height:1px;background:#b3ac86;"></div>
<svg style="left:886px;top:686px" width="16" height="16" viewBox="0 0 16 16"><defs><radialGradient id="gb" cx="0.4" cy="0.3" r="0.8"><stop offset="0" stop-color="#c8f0b0"/><stop offset="0.6" stop-color="#5cc048"/><stop offset="1" stop-color="#3a9a2c"/></radialGradient></defs><circle cx="8" cy="8" r="7.3" fill="url(#gb)" stroke="#4c9a3a" stroke-width="0.8"/></svg>
<span class="t" style="top:686px;font-size:12px;line-height:16px;color:#3d2d00;left:904.5px;transform:scaleX(0.9250);transform-origin:0 0;">Почтовый</span>
<div style="left:211px;top:111px;width:665px;height:503px;background:#cbcbcb;"></div>
<div style="left:211px;top:111px;width:665px;height:1px;background:#f4f4f4;"></div>
<div style="left:211px;top:111px;width:1px;height:503px;background:#f4f4f4;"></div>
<div style="left:875px;top:111px;width:1px;height:503px;background:#989898;"></div>
<div style="left:211px;top:613px;width:665px;height:1px;background:#989898;"></div>
<div style="left:214px;top:133px;width:659px;height:478px;background:#fffbf0;border:1px solid #808080;box-sizing:border-box;"></div>
<svg style="left:217px;top:117px" width="13" height="12" viewBox="0 0 13 12"><rect x="0.5" y="0.5" width="12" height="11" fill="#f6fbff" stroke="#7f97b8"/><path d="M4.5 1 V11 M8.5 1 V11" stroke="#7f97b8"/><rect x="1" y="1" width="3" height="2.6" fill="#f6c416"/><rect x="5" y="1" width="3" height="2.6" fill="#f6c416"/><rect x="9" y="1" width="3" height="2.6" fill="#f6c416"/></svg>
<span class="t" style="top:116px;font-size:12px;line-height:16px;color:#262626;left:235.5px;font-weight:bold;transform:scaleX(1.0172);transform-origin:0 0;">Элемент Номенклатура: Упор крышки багажника (Амортизатор задней двери) ВАЗ 2172, усил</span>
<div style="left:802px;top:128px;width:8px;height:1px;background:#262626;"></div>
<div style="left:818px;top:127px;width:9px;height:2px;background:#303030;"></div>
<div style="left:836px;top:118px;width:11px;height:11px;border:1px solid #303030;box-sizing:border-box;border-top-width:2px;"></div>
<svg style="left:857px;top:118px" width="11" height="11" viewBox="0 0 11 11"><path d="M0.8 0.8 L10.2 10.2 M10.2 0.8 L0.8 10.2" stroke="#303030" stroke-width="1.7"/></svg>
<div style="left:215px;top:134px;width:657px;height:24px;background:#ece6da;"></div>
<div style="left:215px;top:158px;width:657px;height:1px;background:#b3ac86;"></div>
<span class="t" style="top:139px;font-size:12px;line-height:16px;color:#3d2d00;left:219.5px;transform:scaleX(0.9510);transform-origin:0 0;">Действия</span>
<svg style="left:272.5px;top:144px" width="6" height="4" viewBox="0 0 6 4"><path d="M0 0 H6 L3 3.3 Z" fill="#4a3c10"/></svg>
<div style="left:283px;top:137px;width:1px;height:19px;background:#c9c2a4;"></div>
<div style="left:284px;top:137px;width:1px;height:19px;background:#fbf8ee;"></div>
<div style="left:312px;top:137px;width:1px;height:19px;background:#c9c2a4;"></div>
<div style="left:313px;top:137px;width:1px;height:19px;background:#fbf8ee;"></div>
<div style="left:363px;top:137px;width:1px;height:19px;background:#c9c2a4;"></div>
<div style="left:364px;top:137px;width:1px;height:19px;background:#fbf8ee;"></div>
<span class="t" style="top:139px;font-size:12px;line-height:16px;color:#3d2d00;left:369.5px;transform:scaleX(0.9146);transform-origin:0 0;">Перейти</span>
<svg style="left:415.5px;top:144px" width="6" height="4" viewBox="0 0 6 4"><path d="M0 0 H6 L3 3.3 Z" fill="#4a3c10"/></svg>
<div style="left:426px;top:137px;width:1px;height:19px;background:#c9c2a4;"></div>
<div style="left:427px;top:137px;width:1px;height:19px;background:#fbf8ee;"></div>
<span class="t" style="top:139px;font-size:12px;line-height:16px;color:#3d2d00;left:451.8px;transform:scaleX(0.9439);transform-origin:0 0;">Файлы</span>
<div style="left:494px;top:137px;width:1px;height:19px;background:#c9c2a4;"></div>
<div style="left:495px;top:137px;width:1px;height:19px;background:#fbf8ee;"></div>
<div style="left:498px;top:135px;width:78px;height:22px;background:#f7f3e5;border:1px solid #b3ac86;box-sizing:border-box;"></div>
<span class="t" style="top:139px;font-size:12px;line-height:16px;color:#3d2d00;left:502px;transform:scaleX(0.8995);transform-origin:0 0;">Изображение</span>
<div style="left:579px;top:137px;width:1px;height:19px;background:#c9c2a4;"></div>
<div style="left:580px;top:137px;width:1px;height:19px;background:#fbf8ee;"></div>
<div style="left:607px;top:137px;width:1px;height:19px;background:#c9c2a4;"></div>
<div style="left:608px;top:137px;width:1px;height:19px;background:#fbf8ee;"></div>
<span class="t" style="top:139px;font-size:12px;line-height:16px;color:#3d2d00;left:614.5px;transform:scaleX(0.9120);transform-origin:0 0;">Настройка...</span>
<div style="left:684px;top:137px;width:1px;height:19px;background:#c9c2a4;"></div>
<div style="left:685px;top:137px;width:1px;height:19px;background:#fbf8ee;"></div>
<span class="t" style="top:139px;font-size:12px;line-height:16px;color:#3d2d00;left:690.5px;transform:scaleX(0.9157);transform-origin:0 0;">Печать</span>
<svg style="left:729.5px;top:144px" width="6" height="4" viewBox="0 0 6 4"><path d="M0 0 H6 L3 3.3 Z" fill="#4a3c10"/></svg>
<span class="t" style="top:139px;font-size:12px;line-height:16px;color:#3d2d00;left:744.5px;transform:scaleX(0.8814);transform-origin:0 0;">Подходит для...</span>
<svg style="left:0;top:0" width="949" height="160" viewBox="0 0 949 160"><g transform="translate(290 138)"><rect x="0.5" y="0.5" width="12" height="14" fill="#fbfdff" stroke="#7a98c0"/><path d="M2.5 3.5 H10.5 M2.5 6.5 H10.5 M2.5 9.5 H6" stroke="#9ab4d8" stroke-width="0.9"/><path d="M4 11.5 L8.5 7.5 V10 H16 V13 H8.5 V15.5Z" fill="#2a68c0"/></g><g transform="translate(319 140)"><rect x="0.5" y="0.5" width="13" height="12" fill="#fff" stroke="#3a5888"/><rect x="0.5" y="0.5" width="13" height="2.5" fill="#3a5888"/><path d="M3.5 8 Q4 4.8 7.5 5 L7 3.8 L10.5 6 L7 7.8 L7.3 6.6 Q5 6.5 5 8Z" fill="#28a028"/><path d="M10.5 7.5 Q10 10.8 6.5 10.5 L7 11.8 L3.5 9.6 L7 7.8 L6.7 9 Q9 9 9 7.5Z" fill="#28a028"/></g><g transform="translate(342 138)"><rect x="0.5" y="0.5" width="9" height="12" fill="#f4f8fc" stroke="#8aa0c0"/><path d="M3.5 3.5 H9 L12 6.5 V15.5 H3.5Z" fill="#fff" stroke="#8aa0c0"/><circle cx="11" cy="12" r="4" fill="#58c048" stroke="#2a8a20" stroke-width="0.7"/><path d="M11 9.8 V14.2 M8.8 12 H13.2" stroke="#fff" stroke-width="1.5"/></g><g transform="translate(439 139)"><path d="M1 3 Q1 0.5 2.8 0.5 Q4.5 0.5 4.5 3 V10 Q4.5 12.5 2.8 12.5 Q1 12.5 1 10 V5" fill="none" stroke="#b4bcc8" stroke-width="1.3"/></g><defs><radialGradient id="gh" cx="0.4" cy="0.3" r="0.9"><stop offset="0" stop-color="#fff4d8"/><stop offset="0.55" stop-color="#f2c47a"/><stop offset="1" stop-color="#d08a30"/></radialGradient></defs><g transform="translate(585 138)"><circle cx="7.5" cy="7.5" r="7.2" fill="url(#gh)" stroke="#c89048" stroke-width="0.8"/><path d="M5 5.8 Q5 3.2 7.5 3.2 Q10 3.2 10 5.4 Q10 7 7.5 7.8 V9.3" fill="none" stroke="#8a5a10" stroke-width="1.7"/><circle cx="7.5" cy="11.6" r="1.1" fill="#8a5a10"/></g></svg>
<div style="left:223px;top:167px;width:127px;height:131px;border:1px solid #b3ac86;box-sizing:border-box;"></div>
<span class="t" style="top:169px;font-size:12px;line-height:16px;color:#3d2d00;left:354px;transform:scaleX(0.9184);transform-origin:0 0;">Группа:</span>
<div style="left:441px;top:167px;width:423px;height:19px;background:#ffffff;border:1px solid #b3ac86;box-sizing:border-box;"></div>
<div style="left:848px;top:168px;width:15px;height:17px;background:#ece6d8;"></div>
<div style="left:848px;top:168px;width:1px;height:17px;background:#b3ac86;"></div>
<svg style="left:851px;top:171px" width="11" height="11" viewBox="0 0 11 11"><circle cx="4" cy="4" r="2.6" stroke="#9a8840" stroke-width="1.3" fill="#f8f3e0"/><path d="M6 6 L9 9" stroke="#9a8840" stroke-width="1.7"/></svg>
<div style="left:833px;top:168px;width:15px;height:17px;background:#ece6d8;"></div>
<div style="left:833px;top:168px;width:1px;height:17px;background:#b3ac86;"></div>
<svg style="left:837px;top:173px" width="8" height="8" viewBox="0 0 8 8"><path d="M1.2 1.2 L6.8 6.8 M6.8 1.2 L1.2 6.8" stroke="#7a6a28" stroke-width="1.6" fill="none"/></svg>
<div style="left:818px;top:168px;width:15px;height:17px;background:#ece6d8;"></div>
<div style="left:818px;top:168px;width:1px;height:17px;background:#b3ac86;"></div>
<div style="left:822px;top:179px;width:2px;height:2px;background:#9c9364;"></div>
<div style="left:825px;top:179px;width:2px;height:2px;background:#9c9364;"></div>
<div style="left:828px;top:179px;width:2px;height:2px;background:#9c9364;"></div>
<span class="t" style="top:169px;font-size:12px;line-height:16px;color:#000;left:444.5px;transform:scaleX(0.9384);transform-origin:0 0;">Амортизаторы багажника</span>
<span class="t" style="top:192px;font-size:12px;line-height:16px;color:#3d2d00;left:354px;transform:scaleX(0.9130);transform-origin:0 0;">Наименование:</span>
<div style="left:441px;top:190px;width:297px;height:19px;background:#ffffff;border:1px solid #b3ac86;box-sizing:border-box;"></div>
<span class="t" style="top:192px;font-size:12px;line-height:16px;color:#000;left:444.5px;transform:scaleX(0.9241);transform-origin:0 0;">Упор крышки багажника (Амортизатор задней двери) ВА</span>
<span class="t" style="top:192px;font-size:12px;line-height:16px;color:#3d2d00;left:741.5px;transform:scaleX(0.8842);transform-origin:0 0;">Код:</span>
<div style="left:768px;top:190px;width:96px;height:19px;background:#ffffff;border:1px solid #b3ac86;box-sizing:border-box;"></div>
<div style="left:771px;top:193px;width:90px;height:13px;background:#fffbf0;"></div>
<span class="t" style="top:192px;font-size:12px;line-height:16px;color:#000;left:771.5px;transform:scaleX(0.9263);transform-origin:0 0;">УТ000059312</span>
<span class="t" style="top:215px;font-size:12px;line-height:16px;color:#3d2d00;left:354px;transform:scaleX(0.9048);transform-origin:0 0;">Артикул:</span>
<div style="left:441px;top:213px;width:156px;height:19px;background:#ffffff;border:1px solid #b3ac86;box-sizing:border-box;"></div>
<span class="t" style="top:215px;font-size:12px;line-height:16px;color:#3d2d00;left:602.5px;transform:scaleX(0.9051);transform-origin:0 0;">Вид номенклатуры:</span>
<div style="left:707px;top:213px;width:157px;height:19px;background:#ffffff;border:1px solid #b3ac86;box-sizing:border-box;"></div>
<div style="left:848px;top:214px;width:15px;height:17px;background:#ece6d8;"></div>
<div style="left:848px;top:214px;width:1px;height:17px;background:#b3ac86;"></div>
<div style="left:852px;top:225px;width:2px;height:2px;background:#9c9364;"></div>
<div style="left:855px;top:225px;width:2px;height:2px;background:#9c9364;"></div>
<div style="left:858px;top:225px;width:2px;height:2px;background:#9c9364;"></div>
<span class="t" style="top:215px;font-size:12px;line-height:16px;color:#000;left:710.5px;transform:scaleX(0.9493);transform-origin:0 0;">Товар</span>
<span class="t" style="top:238px;font-size:12px;line-height:16px;color:#3d2d00;left:354px;transform:scaleX(0.9238);transform-origin:0 0;">Базовая ед.:</span>
<div style="left:441px;top:236px;width:73px;height:19px;background:#ffffff;border:1px solid #b3ac86;box-sizing:border-box;"></div>
<div style="left:498px;top:237px;width:15px;height:17px;background:#ece6d8;"></div>
<div style="left:498px;top:237px;width:1px;height:17px;background:#b3ac86;"></div>
<div style="left:502px;top:248px;width:2px;height:2px;background:#9c9364;"></div>
<div style="left:505px;top:248px;width:2px;height:2px;background:#9c9364;"></div>
<div style="left:508px;top:248px;width:2px;height:2px;background:#9c9364;"></div>
<span class="t" style="top:237px;font-size:12px;line-height:16px;color:#000;left:444.5px;transform:scaleX(0.8926);transform-origin:0 0;">шт</span>
<svg style="left:520px;top:239px" width="13" height="13" viewBox="0 0 12 12"><rect x="0.5" y="0.5" width="11" height="11" rx="2.2" fill="#fff" stroke="#9a9474"/><path d="M2.8 5.8 L5 8.4 L9.2 3" stroke="#2c2c2c" stroke-width="1.9" fill="none"/></svg>
<span class="t" style="top:238px;font-size:12px;line-height:16px;color:#3d2d00;left:535px;transform:scaleX(0.9194);transform-origin:0 0;">Вести учет по доп.  характеристикам</span>
<span class="t" style="top:262px;font-size:12px;line-height:16px;color:#3d2d00;left:354px;transform:scaleX(0.9123);transform-origin:0 0;">Ед. хран. ост.:</span>
<div style="left:441px;top:260px;width:73px;height:18px;background:#ffffff;border:1px solid #b3ac86;box-sizing:border-box;"></div>
<div style="left:498px;top:261px;width:15px;height:16px;background:#ece6d8;"></div>
<div style="left:498px;top:261px;width:1px;height:16px;background:#b3ac86;"></div>
<div style="left:502px;top:271px;width:2px;height:2px;background:#9c9364;"></div>
<div style="left:505px;top:271px;width:2px;height:2px;background:#9c9364;"></div>
<div style="left:508px;top:271px;width:2px;height:2px;background:#9c9364;"></div>
<span class="t" style="top:261px;font-size:12px;line-height:16px;color:#000;left:444.5px;transform:scaleX(0.8926);transform-origin:0 0;">шт</span>
<span class="t" style="top:284px;font-size:12px;line-height:16px;color:#3d2d00;left:354px;transform:scaleX(0.8943);transform-origin:0 0;">Ед. для отчетов:</span>
<div style="left:441px;top:282px;width:73px;height:19px;background:#ffffff;border:1px solid #b3ac86;box-sizing:border-box;"></div>
<div style="left:498px;top:283px;width:15px;height:17px;background:#ece6d8;"></div>
<div style="left:498px;top:283px;width:1px;height:17px;background:#b3ac86;"></div>
<div style="left:502px;top:294px;width:2px;height:2px;background:#9c9364;"></div>
<div style="left:505px;top:294px;width:2px;height:2px;background:#9c9364;"></div>
<div style="left:508px;top:294px;width:2px;height:2px;background:#9c9364;"></div>
<span class="t" style="top:284px;font-size:12px;line-height:16px;color:#000;left:444.5px;transform:scaleX(0.8926);transform-origin:0 0;">шт</span>
<span class="t" style="top:308px;font-size:12px;line-height:16px;color:#3d2d00;left:355px;transform:scaleX(0.9137);transform-origin:0 0;">Ед. мест:</span>
<div style="left:441px;top:306px;width:73px;height:19px;background:#ffffff;border:1px solid #b3ac86;box-sizing:border-box;"></div>
<div style="left:498px;top:307px;width:15px;height:17px;background:#ece6d8;"></div>
<div style="left:498px;top:307px;width:1px;height:17px;background:#b3ac86;"></div>
<div style="left:502px;top:318px;width:2px;height:2px;background:#9c9364;"></div>
<div style="left:505px;top:318px;width:2px;height:2px;background:#9c9364;"></div>
<div style="left:508px;top:318px;width:2px;height:2px;background:#9c9364;"></div>
<svg style="left:520px;top:309px" width="13" height="13" viewBox="0 0 12 12"><rect x="0.5" y="0.5" width="11" height="11" rx="2.2" fill="#fff" stroke="#9a9474"/></svg>
<span class="t" style="top:308px;font-size:12px;line-height:16px;color:#3d2d00;left:535px;transform:scaleX(0.9200);transform-origin:0 0;">Весовой товар</span>
<span class="t" style="top:332px;font-size:12px;line-height:16px;color:#3d2d00;left:223px;transform:scaleX(0.9012);transform-origin:0 0;">Полное наименование:</span>
<div style="left:354px;top:331px;width:510px;height:18px;background:#ffffff;border:1px solid #b3ac86;box-sizing:border-box;"></div>
<div style="left:849px;top:332px;width:14px;height:16px;background:#ece6d8;"></div>
<div style="left:849px;top:332px;width:1px;height:16px;background:#b3ac86;"></div>
<svg style="left:853px;top:339px" width="8" height="5" viewBox="0 0 8 5"><path d="M0.5 0.5 L7.5 0.5 L4 4.5 Z" fill="#4a3c10"/></svg>
<span class="t" style="top:332px;font-size:12px;line-height:16px;color:#000;left:358px;transform:scaleX(0.9216);transform-origin:0 0;">Упор крышки багажника (Амортизатор задней двери) ВАЗ 2172, усилие 450 N (46 см)</span>
<div style="left:223px;top:352px;width:38px;height:19px;background:#ece7d2;border:1px solid #b3ac86;box-sizing:border-box;border-radius:6px 6px 0 0;border-bottom:none;"></div>
<div style="left:312px;top:352px;width:38px;height:19px;background:#ece7d2;border:1px solid #b3ac86;box-sizing:border-box;border-radius:6px 6px 0 0;border-bottom:none;"></div>
<div style="left:358px;top:352px;width:37px;height:19px;background:#ece7d2;border:1px solid #b3ac86;box-sizing:border-box;border-radius:6px 6px 0 0;border-bottom:none;"></div>
<div style="left:402px;top:352px;width:37px;height:19px;background:#ece7d2;border:1px solid #b3ac86;box-sizing:border-box;border-radius:6px 6px 0 0;border-bottom:none;"></div>
<div style="left:447px;top:352px;width:37px;height:19px;background:#ece7d2;border:1px solid #b3ac86;box-sizing:border-box;border-radius:6px 6px 0 0;border-bottom:none;"></div>
<div style="left:491px;top:352px;width:38px;height:19px;background:#ece7d2;border:1px solid #b3ac86;box-sizing:border-box;border-radius:6px 6px 0 0;border-bottom:none;"></div>
<div style="left:536px;top:352px;width:37px;height:19px;background:#ece7d2;border:1px solid #b3ac86;box-sizing:border-box;border-radius:6px 6px 0 0;border-bottom:none;"></div>
<div style="left:580px;top:352px;width:41px;height:19px;background:#ece7d2;border:1px solid #b3ac86;box-sizing:border-box;border-radius:6px 6px 0 0;border-bottom:none;"></div>
<div style="left:628px;top:352px;width:42px;height:19px;background:#ece7d2;border:1px solid #b3ac86;box-sizing:border-box;border-radius:6px 6px 0 0;border-bottom:none;"></div>
<div style="left:676px;top:352px;width:39px;height:19px;background:#ece7d2;border:1px solid #b3ac86;box-sizing:border-box;border-radius:6px 6px 0 0;border-bottom:none;"></div>
<div style="left:722px;top:352px;width:39px;height:19px;background:#ece7d2;border:1px solid #b3ac86;box-sizing:border-box;border-radius:6px 6px 0 0;border-bottom:none;"></div>
<div style="left:767px;top:352px;width:40px;height:19px;background:#ece7d2;border:1px solid #b3ac86;box-sizing:border-box;border-radius:6px 6px 0 0;border-bottom:none;"></div>
<div style="left:813px;top:352px;width:43px;height:19px;background:#ece7d2;border:1px solid #b3ac86;box-sizing:border-box;border-radius:6px 6px 0 0;border-bottom:none;"></div>
<div style="left:223px;top:370px;width:641px;height:184px;background:#fffbf0;border:1px solid #b3ac86;box-sizing:border-box;"></div>
<span class="t" style="top:354px;font-size:12px;line-height:16px;color:#3d2d00;left:233px;transform:scaleX(0.9250);transform-origin:0 0;">П...</span>
<span class="t" style="top:354px;font-size:12px;line-height:16px;color:#3d2d00;left:322px;transform:scaleX(0.9250);transform-origin:0 0;">Е...</span>
<span class="t" style="top:354px;font-size:12px;line-height:16px;color:#3d2d00;left:367.5px;transform:scaleX(0.9250);transform-origin:0 0;">Х...</span>
<span class="t" style="top:354px;font-size:12px;line-height:16px;color:#3d2d00;left:411.5px;transform:scaleX(0.9250);transform-origin:0 0;">П...</span>
<span class="t" style="top:354px;font-size:12px;line-height:16px;color:#3d2d00;left:456.5px;transform:scaleX(0.9250);transform-origin:0 0;">С...</span>
<span class="t" style="top:354px;font-size:12px;line-height:16px;color:#3d2d00;left:501px;transform:scaleX(0.9250);transform-origin:0 0;">К...</span>
<span class="t" style="top:354px;font-size:12px;line-height:16px;color:#3d2d00;left:545.5px;transform:scaleX(0.9250);transform-origin:0 0;">К...</span>
<span class="t" style="top:354px;font-size:12px;line-height:16px;color:#3d2d00;left:590px;transform:scaleX(0.9250);transform-origin:0 0;">Ш...</span>
<span class="t" style="top:354px;font-size:12px;line-height:16px;color:#3d2d00;left:639px;transform:scaleX(0.9250);transform-origin:0 0;">М...</span>
<span class="t" style="top:354px;font-size:12px;line-height:16px;color:#3d2d00;left:686.5px;transform:scaleX(0.9250);transform-origin:0 0;">Н...</span>
<span class="t" style="top:354px;font-size:12px;line-height:16px;color:#3d2d00;left:732.5px;transform:scaleX(0.9250);transform-origin:0 0;">Ц...</span>
<span class="t" style="top:354px;font-size:12px;line-height:16px;color:#3d2d00;left:778px;transform:scaleX(0.9250);transform-origin:0 0;">О...</span>
<span class="t" style="top:354px;font-size:12px;line-height:16px;color:#3d2d00;left:822px;transform:scaleX(0.9250);transform-origin:0 0;">Зн...</span>
<div style="left:267px;top:352px;width:38px;height:19px;background:#fffbf0;border:1px solid #b3ac86;box-sizing:border-box;border-radius:6px 6px 0 0;border-bottom:none;"></div>
<div style="left:270px;top:353px;width:32px;height:2px;background:#f9d88e;border-radius:3px 3px 0 0;"></div>
<span class="t" style="top:355px;font-size:12px;line-height:16px;color:#3d2d00;left:278px;transform:scaleX(0.9250);transform-origin:0 0;">Д...</span>
<span class="t" style="top:379px;font-size:12px;line-height:16px;color:#3d2d00;left:230.5px;transform:scaleX(0.9378);transform-origin:0 0;">Ответственный за покупки:</span>
<div style="left:380px;top:378px;width:477px;height:18px;background:#ffffff;border:1px solid #b3ac86;box-sizing:border-box;"></div>
<div style="left:841px;top:379px;width:15px;height:16px;background:#ece6d8;"></div>
<div style="left:841px;top:379px;width:1px;height:16px;background:#b3ac86;"></div>
<svg style="left:844px;top:382px" width="11" height="11" viewBox="0 0 11 11"><circle cx="4" cy="4" r="2.6" stroke="#9a8840" stroke-width="1.3" fill="#f8f3e0"/><path d="M6 6 L9 9" stroke="#9a8840" stroke-width="1.7"/></svg>
<div style="left:826px;top:379px;width:15px;height:16px;background:#ece6d8;"></div>
<div style="left:826px;top:379px;width:1px;height:16px;background:#b3ac86;"></div>
<svg style="left:830px;top:384px" width="8" height="8" viewBox="0 0 8 8"><path d="M1.2 1.2 L6.8 6.8 M6.8 1.2 L1.2 6.8" stroke="#7a6a28" stroke-width="1.6" fill="none"/></svg>
<div style="left:811px;top:379px;width:15px;height:16px;background:#ece6d8;"></div>
<div style="left:811px;top:379px;width:1px;height:16px;background:#b3ac86;"></div>
<div style="left:815px;top:389px;width:2px;height:2px;background:#9c9364;"></div>
<div style="left:818px;top:389px;width:2px;height:2px;background:#9c9364;"></div>
<div style="left:821px;top:389px;width:2px;height:2px;background:#9c9364;"></div>
<div style="left:384px;top:381px;width:1px;height:12px;background:#000;"></div>
<span class="t" style="top:401px;font-size:12px;line-height:16px;color:#3d2d00;left:230.5px;transform:scaleX(0.9249);transform-origin:0 0;">Основной поставщик:</span>
<div style="left:380px;top:400px;width:477px;height:19px;background:#ffffff;border:1px solid #b3ac86;box-sizing:border-box;"></div>
<div style="left:841px;top:401px;width:15px;height:17px;background:#ece6d8;"></div>
<div style="left:841px;top:401px;width:1px;height:17px;background:#b3ac86;"></div>
<svg style="left:844px;top:404px" width="11" height="11" viewBox="0 0 11 11"><circle cx="4" cy="4" r="2.6" stroke="#9a8840" stroke-width="1.3" fill="#f8f3e0"/><path d="M6 6 L9 9" stroke="#9a8840" stroke-width="1.7"/></svg>
<div style="left:826px;top:401px;width:15px;height:17px;background:#ece6d8;"></div>
<div style="left:826px;top:401px;width:1px;height:17px;background:#b3ac86;"></div>
<svg style="left:830px;top:406px" width="8" height="8" viewBox="0 0 8 8"><path d="M1.2 1.2 L6.8 6.8 M6.8 1.2 L1.2 6.8" stroke="#7a6a28" stroke-width="1.6" fill="none"/></svg>
<div style="left:811px;top:401px;width:15px;height:17px;background:#ece6d8;"></div>
<div style="left:811px;top:401px;width:1px;height:17px;background:#b3ac86;"></div>
<div style="left:815px;top:412px;width:2px;height:2px;background:#9c9364;"></div>
<div style="left:818px;top:412px;width:2px;height:2px;background:#9c9364;"></div>
<div style="left:821px;top:412px;width:2px;height:2px;background:#9c9364;"></div>
<span class="t" style="top:401px;font-size:12px;line-height:16px;color:#000;left:383.5px;transform:scaleX(0.9058);transform-origin:0 0;">kraft_Toliatti</span>
<span class="t" style="top:426px;font-size:12px;line-height:16px;color:#3d2d00;left:230.5px;transform:scaleX(0.9177);transform-origin:0 0;">Ценовая группа:</span>
<div style="left:380px;top:424px;width:477px;height:19px;background:#ffffff;border:1px solid #b3ac86;box-sizing:border-box;"></div>
<div style="left:841px;top:425px;width:15px;height:17px;background:#ece6d8;"></div>
<div style="left:841px;top:425px;width:1px;height:17px;background:#b3ac86;"></div>
<svg style="left:844px;top:428px" width="11" height="11" viewBox="0 0 11 11"><circle cx="4" cy="4" r="2.6" stroke="#9a8840" stroke-width="1.3" fill="#f8f3e0"/><path d="M6 6 L9 9" stroke="#9a8840" stroke-width="1.7"/></svg>
<div style="left:826px;top:425px;width:15px;height:17px;background:#ece6d8;"></div>
<div style="left:826px;top:425px;width:1px;height:17px;background:#b3ac86;"></div>
<svg style="left:830px;top:430px" width="8" height="8" viewBox="0 0 8 8"><path d="M1.2 1.2 L6.8 6.8 M6.8 1.2 L1.2 6.8" stroke="#7a6a28" stroke-width="1.6" fill="none"/></svg>
<div style="left:811px;top:425px;width:15px;height:17px;background:#ece6d8;"></div>
<div style="left:811px;top:425px;width:1px;height:17px;background:#b3ac86;"></div>
<div style="left:815px;top:436px;width:2px;height:2px;background:#9c9364;"></div>
<div style="left:818px;top:436px;width:2px;height:2px;background:#9c9364;"></div>
<div style="left:821px;top:436px;width:2px;height:2px;background:#9c9364;"></div>
<span class="t" style="top:447px;font-size:12px;line-height:16px;color:#9a5a06;left:230.5px;font-weight:bold;transform:scaleX(1.0042);transform-origin:0 0;">Номенклатурная группа</span>
<div style="left:231px;top:462px;width:626px;height:1px;background:#b3ac86;"></div>
<span class="t" style="top:469px;font-size:12px;line-height:16px;color:#3d2d00;left:230.5px;transform:scaleX(0.9129);transform-origin:0 0;">Номенклатурная группа:</span>
<div style="left:380px;top:467px;width:261px;height:19px;background:#ffffff;border:1px solid #b3ac86;box-sizing:border-box;"></div>
<div style="left:625px;top:468px;width:15px;height:17px;background:#ece6d8;"></div>
<div style="left:625px;top:468px;width:1px;height:17px;background:#b3ac86;"></div>
<svg style="left:628px;top:471px" width="11" height="11" viewBox="0 0 11 11"><circle cx="4" cy="4" r="2.6" stroke="#9a8840" stroke-width="1.3" fill="#f8f3e0"/><path d="M6 6 L9 9" stroke="#9a8840" stroke-width="1.7"/></svg>
<div style="left:610px;top:468px;width:15px;height:17px;background:#ece6d8;"></div>
<div style="left:610px;top:468px;width:1px;height:17px;background:#b3ac86;"></div>
<svg style="left:614px;top:473px" width="8" height="8" viewBox="0 0 8 8"><path d="M1.2 1.2 L6.8 6.8 M6.8 1.2 L1.2 6.8" stroke="#7a6a28" stroke-width="1.6" fill="none"/></svg>
<div style="left:595px;top:468px;width:15px;height:17px;background:#ece6d8;"></div>
<div style="left:595px;top:468px;width:1px;height:17px;background:#b3ac86;"></div>
<div style="left:599px;top:479px;width:2px;height:2px;background:#9c9364;"></div>
<div style="left:602px;top:479px;width:2px;height:2px;background:#9c9364;"></div>
<div style="left:605px;top:479px;width:2px;height:2px;background:#9c9364;"></div>
<span class="t" style="top:469px;font-size:12px;line-height:16px;color:#3d2d00;left:646.5px;transform:scaleX(0.9113);transform-origin:0 0;">Вес вхождения в группу:</span>
<div style="left:777px;top:467px;width:80px;height:19px;background:#ffffff;border:1px solid #b3ac86;box-sizing:border-box;"></div>
<span class="t" style="top:469px;font-size:12px;line-height:16px;color:#000;left:847px;transform:scaleX(0.9250);transform-origin:0 0;">0</span>
<span class="t" style="top:488px;font-size:12px;line-height:16px;color:#9a5a06;left:230.5px;font-weight:bold;transform:scaleX(0.9825);transform-origin:0 0;">Серийные номера</span>
<div style="left:231px;top:503px;width:626px;height:1px;background:#b3ac86;"></div>
<svg style="left:230px;top:509px" width="13" height="13" viewBox="0 0 12 12"><rect x="0.5" y="0.5" width="11" height="11" rx="2.2" fill="#fff" stroke="#9a9474"/></svg>
<span class="t" style="top:508px;font-size:12px;line-height:16px;color:#3d2d00;left:245.5px;transform:scaleX(0.9168);transform-origin:0 0;">Вести серийные номера</span>
<span class="t" style="top:561px;font-size:12px;line-height:16px;color:#3d2d00;left:223px;transform:scaleX(0.9313);transform-origin:0 0;">Комментарий:</span>
<div style="left:305px;top:559px;width:559px;height:19px;background:#ffffff;border:1px solid #b3ac86;box-sizing:border-box;"></div>
<div style="left:848px;top:560px;width:15px;height:17px;background:#ece6d8;"></div>
<div style="left:848px;top:560px;width:1px;height:17px;background:#b3ac86;"></div>
<div style="left:852px;top:571px;width:2px;height:2px;background:#9c9364;"></div>
<div style="left:855px;top:571px;width:2px;height:2px;background:#9c9364;"></div>
<div style="left:858px;top:571px;width:2px;height:2px;background:#9c9364;"></div>
<svg style="left:210px;top:410px" width="660" height="30" viewBox="210 410 660 30"><path d="M221.9 425.9 L852.6 424" stroke="#0909b2" stroke-width="11.2" stroke-linecap="round" fill="none"/></svg>
<div style="left:215px;top:585px;width:657px;height:1px;background:#b3ac86;"></div>
<div style="left:215px;top:586px;width:657px;height:24px;background:#ebe5da;"></div>
<div style="left:603px;top:589px;width:1px;height:19px;background:#c9c2a4;"></div>
<div style="left:604px;top:589px;width:1px;height:19px;background:#fbf8ee;"></div>
<span class="t" style="top:591px;font-size:12px;line-height:16px;color:#3d2d00;left:610.5px;transform:scaleX(0.9182);transform-origin:0 0;">&lt;&lt; Назад</span>
<span class="t" style="top:591px;font-size:12px;line-height:16px;color:#3d2d00;left:667.5px;transform:scaleX(0.9048);transform-origin:0 0;">Далее &gt;&gt;</span>
<div style="left:722px;top:589px;width:1px;height:19px;background:#c9c2a4;"></div>
<div style="left:723px;top:589px;width:1px;height:19px;background:#fbf8ee;"></div>
<span class="t" style="top:591px;font-size:12px;line-height:16px;color:#3d2d00;left:729.5px;font-weight:bold;transform:scaleX(0.9444);transform-origin:0 0;">OK</span>
<div style="left:753px;top:589px;width:1px;height:19px;background:#c9c2a4;"></div>
<div style="left:754px;top:589px;width:1px;height:19px;background:#fbf8ee;"></div>
<span class="t" style="top:591px;font-size:12px;line-height:16px;color:#3d2d00;left:760.5px;transform:scaleX(0.9360);transform-origin:0 0;">Записать</span>
<div style="left:815px;top:589px;width:1px;height:19px;background:#c9c2a4;"></div>
<div style="left:816px;top:589px;width:1px;height:19px;background:#fbf8ee;"></div>
<span class="t" style="top:591px;font-size:12px;line-height:16px;color:#3d2d00;left:822px;transform:scaleX(0.9628);transform-origin:0 0;">Закрыть</span>
</div>
</body>
</html>
